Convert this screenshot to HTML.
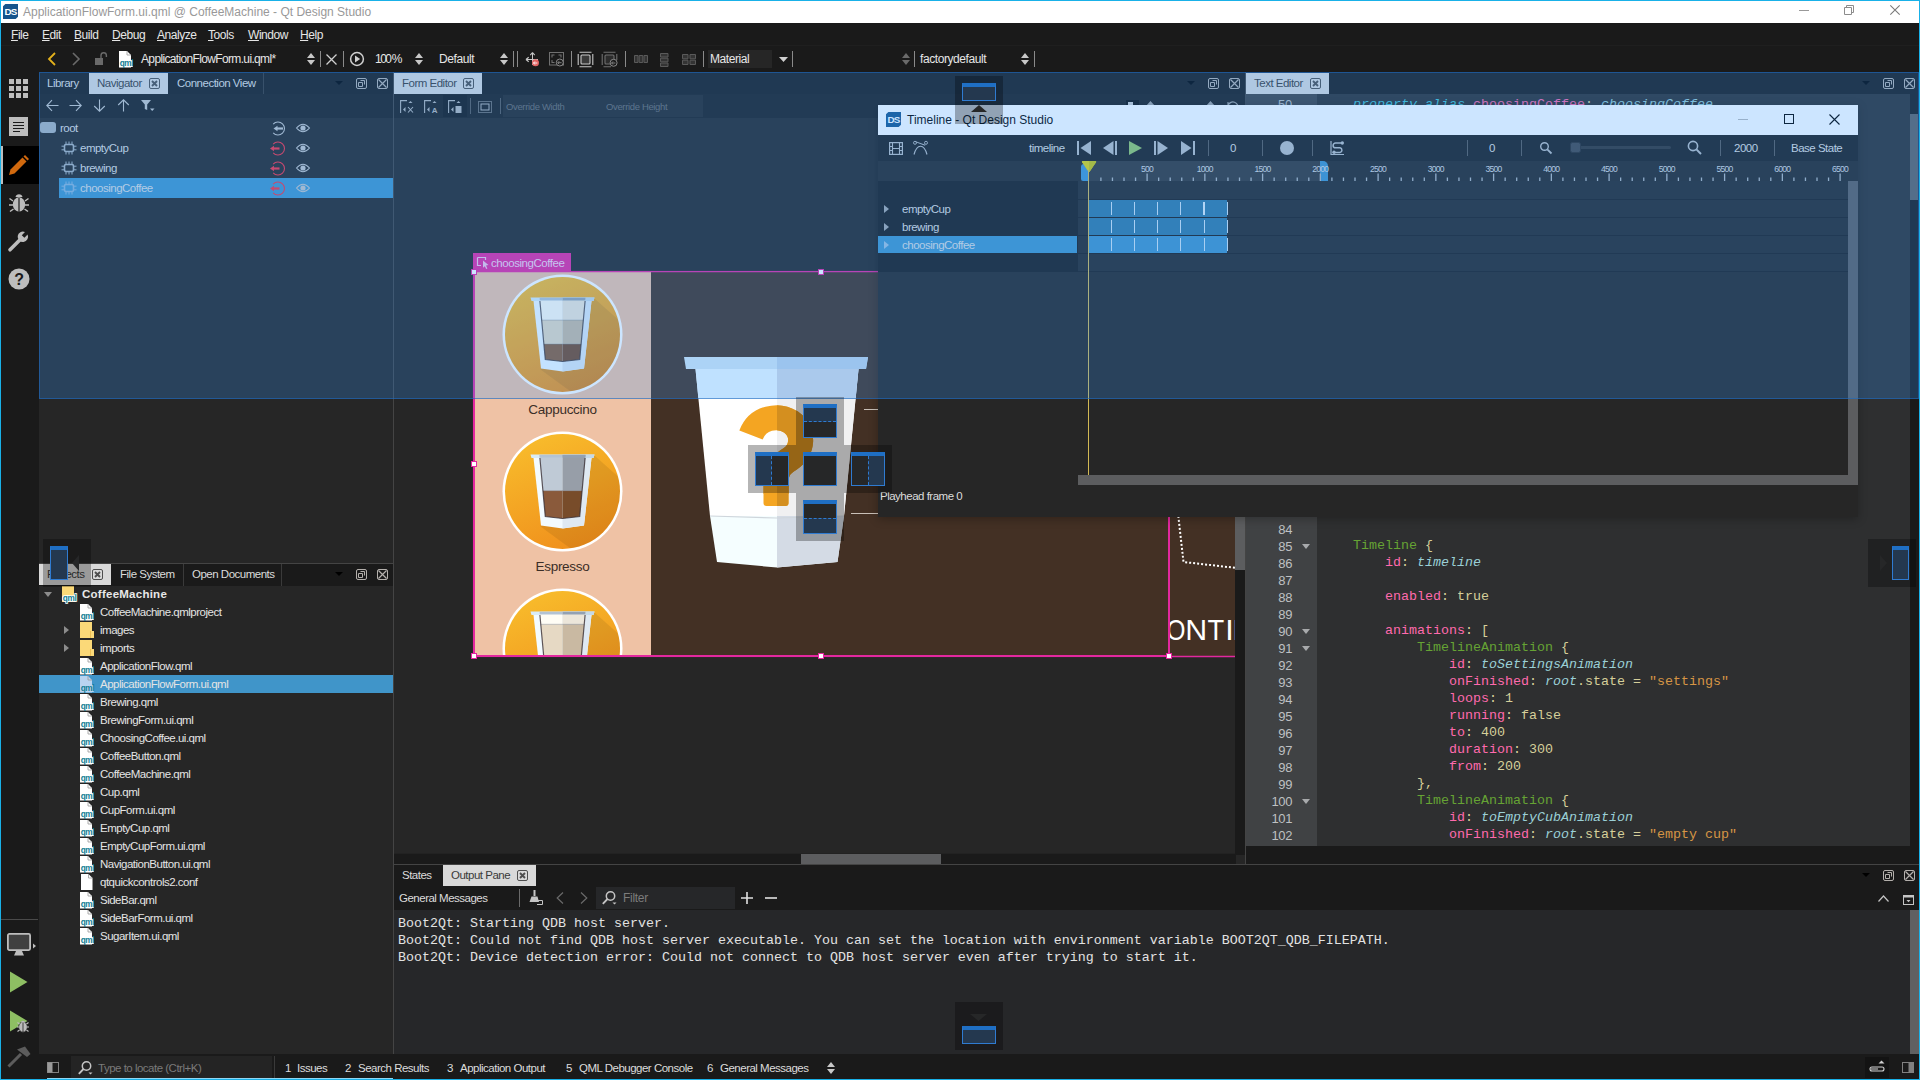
<!DOCTYPE html>
<html><head><meta charset="utf-8"><title>Qt Design Studio</title>
<style>
*{box-sizing:border-box;margin:0;padding:0}
html,body{width:1920px;height:1080px;overflow:hidden;background:#262626}
body{font-family:"Liberation Sans",sans-serif;font-size:11.5px;letter-spacing:-0.5px;color:#dcdcdc;position:relative}
.a{position:absolute}
.t{position:absolute;white-space:pre;line-height:14px}
.mono{font-family:"Liberation Mono",monospace;font-size:13.33px;letter-spacing:0}
svg{position:absolute;overflow:visible}
.sep{position:absolute;width:1px;background:#8a8a8a}
u{text-decoration:underline;text-underline-offset:1px}
</style></head>
<body>
<div class="a" style="left:0px;top:0px;width:1920px;height:23px;background:#ffffff;"></div>
<svg style="left:3px;top:4px" width="15" height="15" viewBox="0 0 16 16"><path d="M2.5 0 H16 V13.5 L13.5 16 H0 V2.5 Z" fill="#16548c"/><text x="8" y="12" font-family="Liberation Sans" font-weight="bold" font-size="10.5" fill="#fff" text-anchor="middle" letter-spacing="-0.9">DS</text></svg>
<div class="t" style="left:23px;top:5px;color:#999999;font-size:12px;letter-spacing:0">ApplicationFlowForm.ui.qml @ CoffeeMachine - Qt Design Studio</div>
<div class="a" style="left:1799px;top:10px;width:10px;height:1px;background:#999;"></div>
<svg style="left:1844px;top:5px" width="10" height="10" viewBox="0 0 10 10"><path d="M0.5 2.5 H7.5 V9.5 H0.5 Z M2.5 2.5 V0.5 H9.5 V7.5 H7.5" fill="none" stroke="#8c8c8c" stroke-width="1"/></svg>
<svg style="left:1890px;top:5px" width="10" height="10" viewBox="0 0 10 10"><path d="M0.3 0.3 L9.7 9.7 M9.7 0.3 L0.3 9.7" fill="none" stroke="#7a7a7a" stroke-width="1.1"/></svg>
<div class="a" style="left:1px;top:23px;width:1918px;height:49px;background:#1a1a1a;"></div>
<div class="a" style="left:1px;top:45px;width:1918px;height:1px;background:#1f1f1f;"></div>
<div class="t" style="left:11px;top:28px;color:#e6e6e6;font-size:12px;letter-spacing:-0.45px"><u>F</u>ile</div>
<div class="t" style="left:42px;top:28px;color:#e6e6e6;font-size:12px;letter-spacing:-0.45px"><u>E</u>dit</div>
<div class="t" style="left:74px;top:28px;color:#e6e6e6;font-size:12px;letter-spacing:-0.45px"><u>B</u>uild</div>
<div class="t" style="left:112px;top:28px;color:#e6e6e6;font-size:12px;letter-spacing:-0.45px"><u>D</u>ebug</div>
<div class="t" style="left:157px;top:28px;color:#e6e6e6;font-size:12px;letter-spacing:-0.45px"><u>A</u>nalyze</div>
<div class="t" style="left:208px;top:28px;color:#e6e6e6;font-size:12px;letter-spacing:-0.45px"><u>T</u>ools</div>
<div class="t" style="left:248px;top:28px;color:#e6e6e6;font-size:12px;letter-spacing:-0.45px"><u>W</u>indow</div>
<div class="t" style="left:300px;top:28px;color:#e6e6e6;font-size:12px;letter-spacing:-0.45px"><u>H</u>elp</div>
<svg style="left:47px;top:52px" width="10" height="14" viewBox="0 0 10 14"><path d="M8 1 L2 7 L8 13" fill="none" stroke="#e3b11c" stroke-width="1.8"/></svg>
<svg style="left:71px;top:52px" width="10" height="14" viewBox="0 0 10 14"><path d="M2 1 L8 7 L2 13" fill="none" stroke="#6a6a6a" stroke-width="1.6"/></svg>
<svg style="left:94px;top:51px" width="14" height="15" viewBox="0 0 14 15"><rect x="1" y="7" width="8" height="7" fill="#6a6a6a"/><path d="M7 7 V4.5 A2.7 2.7 0 0 1 12.4 4.5 V6" fill="none" stroke="#6a6a6a" stroke-width="1.4"/></svg>
<svg style="left:118px;top:51px" width="16" height="17" viewBox="0 0 16 17"><path d="M1 0 H9 L13 4 V16.5 H1 Z" fill="#ffffff"/><path d="M9 0 V4 H13" fill="none" stroke="#9a9a9a" stroke-width="0.8"/><rect x="1.5" y="9" width="13.5" height="7" rx="1" fill="#ffffff"/><text x="8.4" y="15" font-family="Liberation Sans" font-weight="bold" font-size="8.2" fill="#0f7c94" text-anchor="middle" letter-spacing="-0.35">qml</text></svg>
<div class="t" style="left:141px;top:52px;color:#e6e6e6;font-size:12px;letter-spacing:-0.65px">ApplicationFlowForm.ui.qml*</div>
<svg style="left:307px;top:52px" width="8" height="14" viewBox="0 0 8 14"><path d="M0 6 L4 1 L8 6 Z M0 8 L4 13 L8 8 Z" fill="#c8c8c8"/></svg>
<div class="sep" style="left:320px;top:51px;height:16px"></div>
<svg style="left:326px;top:54px" width="11" height="11" viewBox="0 0 11 11"><path d="M0.5 0.5 L10.5 10.5 M10.5 0.5 L0.5 10.5" fill="none" stroke="#d0d0d0" stroke-width="1.3"/></svg>
<div class="sep" style="left:343px;top:51px;height:16px"></div>
<svg style="left:349px;top:51px" width="16" height="16" viewBox="0 0 16 16"><circle cx="8" cy="8" r="6.4" fill="none" stroke="#d0d0d0" stroke-width="1.5"/><path d="M6 4.6 L11.2 8 L6 11.4 Z" fill="#d0d0d0"/></svg>
<div class="t" style="left:375px;top:52px;color:#e6e6e6;font-size:12px;letter-spacing:-1.5px;word-spacing:-0.5px">100 %</div>
<svg style="left:415px;top:52px" width="8" height="14" viewBox="0 0 8 14"><path d="M0 6 L4 1 L8 6 Z M0 8 L4 13 L8 8 Z" fill="#c8c8c8"/></svg>
<div class="t" style="left:439px;top:52px;color:#e6e6e6;font-size:12px;letter-spacing:-0.42px">Default</div>
<svg style="left:500px;top:52px" width="8" height="14" viewBox="0 0 8 14"><path d="M0 6 L4 1 L8 6 Z M0 8 L4 13 L8 8 Z" fill="#c8c8c8"/></svg>
<div class="sep" style="left:513px;top:51px;height:16px"></div>
<div class="sep" style="left:517px;top:51px;height:16px"></div>
<svg style="left:525px;top:51px" width="16" height="17" viewBox="0 0 16 17"><path d="M7.5 2 V14 M1.5 8.5 H13" fill="none" stroke="#c8c8c8" stroke-width="1"/><path d="M7.5 1.5 L5.3 4.2 M7.5 1.5 L9.7 4.2 M1 8.5 L3.7 6.3 M1 8.5 L3.7 10.7" fill="none" stroke="#c8c8c8" stroke-width="1.1"/><circle cx="10.5" cy="11.8" r="3.5" fill="#e26464"/><path d="M8.5 12.0 H12.3 M8.5 12.0 L9.9 10.5 M8.5 12.0 L9.9 13.5" stroke="#ffffff" stroke-width="0.9" fill="none"/></svg>
<svg style="left:549px;top:52px" width="16" height="15" viewBox="0 0 16 15"><rect x="0.5" y="0.5" width="14" height="12.5" fill="none" stroke="#707070" stroke-width="1"/><path d="M3 5.5 V3 H5.5 M9.5 3 H12 V5.5 M3 8 V10.5 H5.5" fill="none" stroke="#707070" stroke-width="1.1"/><circle cx="10.8" cy="10.5" r="3.5" fill="#1a1a1a" stroke="#8a8a8a" stroke-width="1"/><path d="M8.8 10.7 H12.600000000000001 M8.8 10.7 L10.200000000000001 9.2 M8.8 10.7 L10.200000000000001 12.2" stroke="#8a8a8a" stroke-width="0.9" fill="none"/></svg>
<div class="sep" style="left:571px;top:51px;height:16px"></div>
<svg style="left:577px;top:51px" width="17" height="17" viewBox="0 0 17 17"><rect x="4" y="4" width="9" height="9" rx="1" fill="#3a3a3a" stroke="#c8c8c8" stroke-width="1.1"/><path d="M2.5 1.2 H14.5 M2.5 15.8 H14.5 M1.2 3 V14 M15.8 3 V14" stroke="#c8c8c8" stroke-width="1.1"/></svg>
<svg style="left:601px;top:51px" width="18" height="17" viewBox="0 0 18 17"><rect x="4" y="4" width="9" height="9" rx="1" fill="#2c2c2c" stroke="#707070" stroke-width="1.1"/><path d="M2.5 1.2 H14.5 M2.5 15.8 H10 M1.2 3 V14 M15.8 3 V9" stroke="#707070" stroke-width="1.1"/><circle cx="12.6" cy="11.8" r="3.5" fill="#1a1a1a" stroke="#8a8a8a" stroke-width="1"/><path d="M10.6 12.0 H14.4 M10.6 12.0 L12.0 10.5 M10.6 12.0 L12.0 13.5" stroke="#8a8a8a" stroke-width="0.9" fill="none"/></svg>
<div class="sep" style="left:625px;top:51px;height:16px"></div>
<svg style="left:634px;top:55px" width="14" height="8" viewBox="0 0 14 8"><path d="M0.5 0.5 H4 V7.5 H0.5 Z M5.2 0.5 H8.8 V7.5 H5.2 Z M10 0.5 H13.5 V7.5 H10 Z" fill="#343434" stroke="#5a5a5a" stroke-width="1"/></svg>
<svg style="left:660px;top:53px" width="9" height="14" viewBox="0 0 9 14"><path d="M0.5 0.5 H8 V4 H0.5 Z M0.5 5.2 H8 V8.8 H0.5 Z M0.5 10 H8 V13.5 H0.5 Z" fill="#343434" stroke="#5a5a5a" stroke-width="1"/></svg>
<svg style="left:682px;top:54px" width="14" height="11" viewBox="0 0 14 11"><path d="M0.5 0.5 H6 V4.8 H0.5 Z M8 0.5 H13.5 V4.8 H8 Z M0.5 6.2 H6 V10.5 H0.5 Z M8 6.2 H13.5 V10.5 H8 Z" fill="#343434" stroke="#5a5a5a" stroke-width="1"/></svg>
<div class="sep" style="left:703px;top:51px;height:16px"></div>
<div class="a" style="left:708px;top:50px;width:64px;height:18px;background:#262626;"></div>
<div class="t" style="left:710px;top:52px;color:#e6e6e6;font-size:12px;letter-spacing:-0.42px">Material</div>
<svg style="left:779px;top:57px" width="9" height="5" viewBox="0 0 9 5"><path d="M0 0 H9 L4.5 5 Z" fill="#d0d0d0"/></svg>
<div class="sep" style="left:792px;top:51px;height:16px"></div>
<svg style="left:902px;top:52px" width="8" height="14" viewBox="0 0 8 14"><path d="M0 6 L4 1 L8 6 Z M0 8 L4 13 L8 8 Z" fill="#6a6a6a"/></svg>
<div class="sep" style="left:914px;top:51px;height:16px"></div>
<div class="t" style="left:920px;top:52px;color:#e6e6e6;font-size:12px;letter-spacing:-0.42px">factorydefault</div>
<svg style="left:1021px;top:52px" width="8" height="14" viewBox="0 0 8 14"><path d="M0 6 L4 1 L8 6 Z M0 8 L4 13 L8 8 Z" fill="#c8c8c8"/></svg>
<div class="sep" style="left:1034px;top:51px;height:16px"></div>
<div class="a" style="left:1px;top:72px;width:38px;height:1007px;background:#1a1a1a;"></div>
<div class="a" style="left:1px;top:146px;width:38px;height:38px;background:#000000;"></div>
<div class="a" style="left:1px;top:146px;width:2px;height:38px;background:#bdbdbd;"></div>
<svg style="left:9px;top:79px" width="19" height="19" viewBox="0 0 19 19"><rect x="0" y="0" width="5" height="5" fill="#bdbdbd"/><rect x="7" y="0" width="5" height="5" fill="#bdbdbd"/><rect x="14" y="0" width="5" height="5" fill="#bdbdbd"/><rect x="0" y="7" width="5" height="5" fill="#bdbdbd"/><rect x="7" y="7" width="5" height="5" fill="#bdbdbd"/><rect x="14" y="7" width="5" height="5" fill="#bdbdbd"/><rect x="0" y="14" width="5" height="5" fill="#bdbdbd"/><rect x="7" y="14" width="5" height="5" fill="#bdbdbd"/><rect x="14" y="14" width="5" height="5" fill="#bdbdbd"/></svg>
<svg style="left:9px;top:117px" width="19" height="19" viewBox="0 0 19 19"><rect x="0" y="0" width="19" height="19" fill="#bdbdbd"/><path d="M4 5.5 H15 M4 8.5 H15 M4 11.5 H15 M4 14.5 H11" stroke="#1a1a1a" stroke-width="1.2"/></svg>
<svg style="left:8px;top:155px" width="21" height="21" viewBox="0 0 21 21"><path d="M1 20 L2.5 14.5 L14.5 2.5 L18.5 6.5 L6.5 18.5 Z" fill="#d1690e"/><path d="M15.5 1.5 L17 0 L21 4 L19.5 5.5 Z" fill="#d1690e"/></svg>
<svg style="left:8px;top:192px" width="22" height="22" viewBox="0 0 22 22"><ellipse cx="11" cy="12.5" rx="6.2" ry="7.2" fill="#bdbdbd"/><path d="M7.5 5 A3.6 3.6 0 0 1 14.5 5 Z" fill="#bdbdbd"/><path d="M11 6 V20" stroke="#1a1a1a" stroke-width="1.2"/><path d="M5 9 L1.5 6.5 M5 13 H1 M5.5 17 L2 19.5 M17 9 L20.5 6.5 M17 13 H21 M16.5 17 L20 19.5" stroke="#bdbdbd" stroke-width="1.5" fill="none"/></svg>
<svg style="left:8px;top:230px" width="22" height="22" viewBox="0 0 22 22"><path d="M2 19.8 L11.5 10.3" stroke="#bdbdbd" stroke-width="3.6" stroke-linecap="round"/><path d="M19.6 4.6 L16.4 7.8 L13.8 5.2 L17 2 A5.2 5.2 0 1 0 19.6 4.6 Z" fill="#bdbdbd"/></svg>
<svg style="left:8px;top:268px" width="22" height="22" viewBox="0 0 22 22"><circle cx="11" cy="11" r="10.5" fill="#bdbdbd"/><text x="11" y="16.5" font-family="Liberation Sans" font-weight="bold" font-size="16" fill="#1a1a1a" text-anchor="middle">?</text></svg>
<div class="a" style="left:1px;top:919px;width:37px;height:1px;background:#4a4a4a;"></div>
<svg style="left:7px;top:933px" width="30" height="26" viewBox="0 0 30 26"><rect x="0.9" y="0.9" width="22.2" height="16.2" rx="1.5" fill="#404040" stroke="#bdbdbd" stroke-width="1.8"/><path d="M9 18 H15 L17 22.5 H7 Z" fill="#bdbdbd"/><path d="M26 10.5 L29 13 L26 15.5 Z" fill="#bdbdbd"/></svg>
<svg style="left:10px;top:970px" width="18" height="24" viewBox="0 0 18 24"><path d="M0 1.5 L17.5 12 L0 22.5 Z" fill="#8ebf63"/></svg>
<svg style="left:10px;top:1010px" width="20" height="24" viewBox="0 0 20 24"><path d="M0 0.5 L17.5 11 L0 21.5 Z" fill="#8ebf63"/><ellipse cx="13" cy="17" rx="4.4" ry="5.2" fill="#bdbdbd" stroke="#1a1a1a" stroke-width="0.8"/><path d="M13 12.5 V22" stroke="#333" stroke-width="0.9"/><path d="M10.5 12.6 A2.6 2.4 0 0 1 15.5 12.6 Z" fill="#bdbdbd"/><path d="M9.5 14 L7.5 12.5 M9.3 17 H7 M9.5 20 L7.5 21.5 M16.5 14 L18.5 12.5 M16.7 17 H19 M16.5 20 L18.5 21.5" stroke="#bdbdbd" stroke-width="1.1"/></svg>
<svg style="left:6px;top:1045px" width="26" height="24" viewBox="0 0 26 24"><path d="M2.5 21.5 L15 9" stroke="#5c5c5c" stroke-width="3"/><path d="M11 4.5 L19 1.5 L24.5 9 L21 12 Z" fill="#5c5c5c"/></svg>
<div class="a" style="left:39px;top:72px;width:354px;height:22px;background:#1a1a1a;"></div>
<div class="a" style="left:39px;top:94px;width:354px;height:24px;background:#1d1d1d;"></div>
<div class="a" style="left:39px;top:118px;width:354px;height:445px;background:#262626;"></div>
<div class="t" style="left:47px;top:76px;color:#dcdcdc;">Library</div>
<div class="a" style="left:89px;top:73px;width:79px;height:21px;background:#d9d9d9;"></div>
<div class="t" style="left:97px;top:76px;color:#3a3a3a;">Navigator</div>
<svg style="left:149px;top:78px" width="11" height="11" viewBox="0 0 11 11"><rect x="0.5" y="0.5" width="10" height="10" rx="1.5" fill="none" stroke="#4e4e4e" stroke-width="1"/><path d="M3 3 L8 8 M8 3 L3 8" stroke="#4e4e4e" stroke-width="1.9" fill="none"/></svg>
<div class="t" style="left:177px;top:76px;color:#dcdcdc;">Connection View</div>
<div class="a" style="left:263px;top:73px;width:1px;height:21px;background:#3a3a3a;"></div>
<svg style="left:335px;top:81px" width="8" height="4" viewBox="0 0 8 4"><path d="M0 0 H8 L4 4 Z" fill="#000000"/></svg>
<svg style="left:356px;top:78px" width="11" height="11" viewBox="0 0 11 11"><rect x="0.5" y="0.5" width="10" height="10" rx="1.5" fill="none" stroke="#b4b0ac" stroke-width="1"/><path d="M4.5 2.5 H8.5 V6.5 M2.5 4.5 H6.5 V8.5 H2.5 Z" stroke="#b4b0ac" stroke-width="1" fill="none"/></svg>
<svg style="left:377px;top:78px" width="11" height="11" viewBox="0 0 11 11"><rect x="0.5" y="0.5" width="10" height="10" rx="1.5" fill="none" stroke="#b4b0ac" stroke-width="1"/><path d="M1.5 1.5 L9.5 9.5 M9.5 1.5 L1.5 9.5" stroke="#b4b0ac" stroke-width="1.2" fill="none"/></svg>
<svg style="left:46px;top:99px" width="13" height="13" viewBox="0 0 13 13"><g transform="rotate(0 6.5 6.5)"><path d="M0.8 6.5 H12.5 M6 1.2 L0.8 6.5 L6 11.8" fill="none" stroke="#c4c4c4" stroke-width="1.1"/></g></svg>
<svg style="left:69px;top:99px" width="13" height="13" viewBox="0 0 13 13"><g transform="rotate(180 6.5 6.5)"><path d="M0.8 6.5 H12.5 M6 1.2 L0.8 6.5 L6 11.8" fill="none" stroke="#c4c4c4" stroke-width="1.1"/></g></svg>
<svg style="left:93px;top:99px" width="13" height="13" viewBox="0 0 13 13"><g transform="rotate(270 6.5 6.5)"><path d="M0.8 6.5 H12.5 M6 1.2 L0.8 6.5 L6 11.8" fill="none" stroke="#c4c4c4" stroke-width="1.1"/></g></svg>
<svg style="left:117px;top:99px" width="13" height="13" viewBox="0 0 13 13"><g transform="rotate(90 6.5 6.5)"><path d="M0.8 6.5 H12.5 M6 1.2 L0.8 6.5 L6 11.8" fill="none" stroke="#c4c4c4" stroke-width="1.1"/></g></svg>
<svg style="left:141px;top:100px" width="14" height="12" viewBox="0 0 14 12"><path d="M0 0 H10 L6.2 4.5 V10 L3.8 9 V4.5 Z" fill="#c4c4c4"/><path d="M9 8.5 H13.5 L11.2 11 Z" fill="#c4c4c4"/></svg>
<div class="a" style="left:40px;top:122px;width:16px;height:11px;background:#a9b2ba;border-radius:3px"></div>
<div class="t" style="left:60px;top:121px;color:#dcdcdc;">root</div>
<div class="a" style="left:59px;top:178px;width:334px;height:20px;background:#4095c9;"></div>
<svg style="left:61px;top:141px" width="16" height="14" viewBox="0 0 16 14"><rect x="3.5" y="3.5" width="9" height="7" rx="1.5" fill="none" stroke="#a9b2ba" stroke-width="1.6"/><path d="M5 0.5 V3 M5 11 V13.5" stroke="#a9b2ba" stroke-width="1"/><path d="M8 0.5 V3 M8 11 V13.5" stroke="#a9b2ba" stroke-width="1"/><path d="M11 0.5 V3 M11 11 V13.5" stroke="#a9b2ba" stroke-width="1"/><path d="M0.5 5.2 H3 M13 5.2 H15.5" stroke="#a9b2ba" stroke-width="1"/><path d="M0.5 8.8 H3 M13 8.8 H15.5" stroke="#a9b2ba" stroke-width="1"/></svg>
<div class="t" style="left:80px;top:141px;color:#dcdcdc;">emptyCup</div>
<svg style="left:61px;top:161px" width="16" height="14" viewBox="0 0 16 14"><rect x="3.5" y="3.5" width="9" height="7" rx="1.5" fill="none" stroke="#a9b2ba" stroke-width="1.6"/><path d="M5 0.5 V3 M5 11 V13.5" stroke="#a9b2ba" stroke-width="1"/><path d="M8 0.5 V3 M8 11 V13.5" stroke="#a9b2ba" stroke-width="1"/><path d="M11 0.5 V3 M11 11 V13.5" stroke="#a9b2ba" stroke-width="1"/><path d="M0.5 5.2 H3 M13 5.2 H15.5" stroke="#a9b2ba" stroke-width="1"/><path d="M0.5 8.8 H3 M13 8.8 H15.5" stroke="#a9b2ba" stroke-width="1"/></svg>
<div class="t" style="left:80px;top:161px;color:#dcdcdc;">brewing</div>
<svg style="left:61px;top:181px" width="16" height="14" viewBox="0 0 16 14"><rect x="3.5" y="3.5" width="9" height="7" rx="1.5" fill="none" stroke="#8db4d6" stroke-width="1.6"/><path d="M5 0.5 V3 M5 11 V13.5" stroke="#8db4d6" stroke-width="1"/><path d="M8 0.5 V3 M8 11 V13.5" stroke="#8db4d6" stroke-width="1"/><path d="M11 0.5 V3 M11 11 V13.5" stroke="#8db4d6" stroke-width="1"/><path d="M0.5 5.2 H3 M13 5.2 H15.5" stroke="#8db4d6" stroke-width="1"/><path d="M0.5 8.8 H3 M13 8.8 H15.5" stroke="#8db4d6" stroke-width="1"/></svg>
<div class="t" style="left:80px;top:181px;color:#dcdcdc;">choosingCoffee</div>
<svg style="left:270px;top:121px" width="16" height="15" viewBox="0 0 16 15"><path d="M3.2 3.1 A6.5 6.5 0 1 1 3.2 11.9" fill="none" stroke="#c4c4c4" stroke-width="1.1"/><path d="M6.5 7.5 H13.0" stroke="#c4c4c4" stroke-width="2.2"/><path d="M3.5 7.5 L7.5 4.8 V10.2 Z" fill="#c4c4c4"/></svg>
<svg style="left:296px;top:123px" width="14" height="10" viewBox="0 0 14 10"><path d="M0.5 5 Q7 -2.5 13.5 5 Q7 12.5 0.5 5 Z" fill="none" stroke="#c4c4c4" stroke-width="1.1"/><circle cx="7" cy="5" r="2.6" fill="#c4c4c4"/></svg>
<svg style="left:270px;top:141px" width="16" height="15" viewBox="0 0 16 15"><path d="M3.2 3.1 A6.5 6.5 0 1 1 3.2 11.9" fill="none" stroke="#f53040" stroke-width="1.1"/><path d="M3.0 7.5 H9.5" stroke="#f53040" stroke-width="2.2"/><path d="M0.0 7.5 L4.0 4.8 V10.2 Z" fill="#f53040"/></svg>
<svg style="left:296px;top:143px" width="14" height="10" viewBox="0 0 14 10"><path d="M0.5 5 Q7 -2.5 13.5 5 Q7 12.5 0.5 5 Z" fill="none" stroke="#c4c4c4" stroke-width="1.1"/><circle cx="7" cy="5" r="2.6" fill="#c4c4c4"/></svg>
<svg style="left:270px;top:161px" width="16" height="15" viewBox="0 0 16 15"><path d="M3.2 3.1 A6.5 6.5 0 1 1 3.2 11.9" fill="none" stroke="#f53040" stroke-width="1.1"/><path d="M3.0 7.5 H9.5" stroke="#f53040" stroke-width="2.2"/><path d="M0.0 7.5 L4.0 4.8 V10.2 Z" fill="#f53040"/></svg>
<svg style="left:296px;top:163px" width="14" height="10" viewBox="0 0 14 10"><path d="M0.5 5 Q7 -2.5 13.5 5 Q7 12.5 0.5 5 Z" fill="none" stroke="#c4c4c4" stroke-width="1.1"/><circle cx="7" cy="5" r="2.6" fill="#c4c4c4"/></svg>
<svg style="left:270px;top:181px" width="16" height="15" viewBox="0 0 16 15"><path d="M3.2 3.1 A6.5 6.5 0 1 1 3.2 11.9" fill="none" stroke="#f53040" stroke-width="1.1"/><path d="M3.0 7.5 H9.5" stroke="#f53040" stroke-width="2.2"/><path d="M0.0 7.5 L4.0 4.8 V10.2 Z" fill="#f53040"/></svg>
<svg style="left:296px;top:183px" width="14" height="10" viewBox="0 0 14 10"><path d="M0.5 5 Q7 -2.5 13.5 5 Q7 12.5 0.5 5 Z" fill="none" stroke="#c4c4c4" stroke-width="1.1"/><circle cx="7" cy="5" r="2.6" fill="#c4c4c4"/></svg>
<div class="a" style="left:39px;top:563px;width:354px;height:1px;background:#444444;"></div>
<div class="a" style="left:39px;top:564px;width:354px;height:22px;background:#1a1a1a;"></div>
<div class="a" style="left:39px;top:586px;width:354px;height:468px;background:#262626;"></div>
<div class="a" style="left:39px;top:564px;width:72px;height:21px;background:#d9d9d9;"></div>
<div class="t" style="left:47px;top:567px;color:#3a3a3a;">Projects</div>
<svg style="left:92px;top:569px" width="11" height="11" viewBox="0 0 11 11"><rect x="0.5" y="0.5" width="10" height="10" rx="1.5" fill="none" stroke="#4e4e4e" stroke-width="1"/><path d="M3 3 L8 8 M8 3 L3 8" stroke="#4e4e4e" stroke-width="1.9" fill="none"/></svg>
<div class="t" style="left:120px;top:567px;color:#dcdcdc;">File System</div>
<div class="a" style="left:183px;top:564px;width:1px;height:22px;background:#3a3a3a;"></div>
<div class="t" style="left:192px;top:567px;color:#dcdcdc;">Open Documents</div>
<div class="a" style="left:281px;top:564px;width:1px;height:22px;background:#3a3a3a;"></div>
<svg style="left:335px;top:572px" width="8" height="4" viewBox="0 0 8 4"><path d="M0 0 H8 L4 4 Z" fill="#000000"/></svg>
<svg style="left:356px;top:569px" width="11" height="11" viewBox="0 0 11 11"><rect x="0.5" y="0.5" width="10" height="10" rx="1.5" fill="none" stroke="#b4b0ac" stroke-width="1"/><path d="M4.5 2.5 H8.5 V6.5 M2.5 4.5 H6.5 V8.5 H2.5 Z" stroke="#b4b0ac" stroke-width="1" fill="none"/></svg>
<svg style="left:377px;top:569px" width="11" height="11" viewBox="0 0 11 11"><rect x="0.5" y="0.5" width="10" height="10" rx="1.5" fill="none" stroke="#b4b0ac" stroke-width="1"/><path d="M1.5 1.5 L9.5 9.5 M9.5 1.5 L1.5 9.5" stroke="#b4b0ac" stroke-width="1.2" fill="none"/></svg>
<svg style="left:44px;top:592px" width="8" height="5" viewBox="0 0 8 5"><path d="M0 0 H8 L4 5 Z" fill="#8c8c8c"/></svg>
<svg style="left:62px;top:586px" width="14" height="16" viewBox="0 0 14 16"><path d="M0 0 H12 V16 H0 Z" fill="#fbd978"/><path d="M10 9 H14 V16 H10 Z" fill="#fbd978"/><path d="M10.5 9 V16" stroke="#e8b84a" stroke-width="0.8"/></svg>
<svg style="left:60px;top:590px" width="20" height="14" viewBox="0 0 20 14"><text x="9.6" y="10.5" font-family="Liberation Sans" font-weight="bold" font-size="8.2" fill="#0f7c94" stroke="#ffffff" stroke-width="1.6" paint-order="stroke" text-anchor="middle" letter-spacing="-0.35">qml</text></svg>
<div class="t" style="left:82px;top:587px;color:#e8e8e8;font-weight:bold;letter-spacing:0.25px">CoffeeMachine</div>
<svg style="left:79px;top:604px" width="16" height="17" viewBox="0 0 16 17"><path d="M1 0 H9 L13 4 V16.5 H1 Z" fill="#ffffff"/><path d="M9 0 V4 H13" fill="none" stroke="#9a9a9a" stroke-width="0.8"/><rect x="1.5" y="9" width="13.5" height="7" rx="1" fill="#ffffff"/><text x="8.4" y="15" font-family="Liberation Sans" font-weight="bold" font-size="8.2" fill="#0f7c94" text-anchor="middle" letter-spacing="-0.35">qml</text></svg>
<div class="t" style="left:100px;top:605px;color:#e4e4e4;">CoffeeMachine.qmlproject</div>
<svg style="left:64px;top:626px" width="5" height="8" viewBox="0 0 5 8"><path d="M0 0 L5 4 L0 8 Z" fill="#8c8c8c"/></svg>
<svg style="left:80px;top:622px" width="14" height="16" viewBox="0 0 14 16"><path d="M0 0 H12 V16 H0 Z" fill="#fbd978"/><path d="M10 9 H14 V16 H10 Z" fill="#fbd978"/><path d="M10.5 9 V16" stroke="#e8b84a" stroke-width="0.8"/></svg>
<div class="t" style="left:100px;top:623px;color:#e4e4e4;">images</div>
<svg style="left:64px;top:644px" width="5" height="8" viewBox="0 0 5 8"><path d="M0 0 L5 4 L0 8 Z" fill="#8c8c8c"/></svg>
<svg style="left:80px;top:640px" width="14" height="16" viewBox="0 0 14 16"><path d="M0 0 H12 V16 H0 Z" fill="#fbd978"/><path d="M10 9 H14 V16 H10 Z" fill="#fbd978"/><path d="M10.5 9 V16" stroke="#e8b84a" stroke-width="0.8"/></svg>
<div class="t" style="left:100px;top:641px;color:#e4e4e4;">imports</div>
<svg style="left:79px;top:658px" width="16" height="17" viewBox="0 0 16 17"><path d="M1 0 H9 L13 4 V16.5 H1 Z" fill="#ffffff"/><path d="M9 0 V4 H13" fill="none" stroke="#9a9a9a" stroke-width="0.8"/><rect x="1.5" y="9" width="13.5" height="7" rx="1" fill="#ffffff"/><text x="8.4" y="15" font-family="Liberation Sans" font-weight="bold" font-size="8.2" fill="#0f7c94" text-anchor="middle" letter-spacing="-0.35">qml</text></svg>
<div class="t" style="left:100px;top:659px;color:#e4e4e4;">ApplicationFlow.qml</div>
<div class="a" style="left:39px;top:675px;width:354px;height:18px;background:#4095c9;"></div>
<svg style="left:79px;top:676px" width="16" height="17" viewBox="0 0 16 17"><path d="M1 0 H9 L13 4 V16.5 H1 Z" fill="#b9d4f0"/><path d="M9 0 V4 H13" fill="none" stroke="#9a9a9a" stroke-width="0.8"/><rect x="1.5" y="9" width="13.5" height="7" rx="1" fill="#b9d4f0"/><text x="8.4" y="15" font-family="Liberation Sans" font-weight="bold" font-size="8.2" fill="#0f7c94" text-anchor="middle" letter-spacing="-0.35">qml</text></svg>
<div class="t" style="left:100px;top:677px;color:#e4e4e4;">ApplicationFlowForm.ui.qml</div>
<svg style="left:79px;top:694px" width="16" height="17" viewBox="0 0 16 17"><path d="M1 0 H9 L13 4 V16.5 H1 Z" fill="#ffffff"/><path d="M9 0 V4 H13" fill="none" stroke="#9a9a9a" stroke-width="0.8"/><rect x="1.5" y="9" width="13.5" height="7" rx="1" fill="#ffffff"/><text x="8.4" y="15" font-family="Liberation Sans" font-weight="bold" font-size="8.2" fill="#0f7c94" text-anchor="middle" letter-spacing="-0.35">qml</text></svg>
<div class="t" style="left:100px;top:695px;color:#e4e4e4;">Brewing.qml</div>
<svg style="left:79px;top:712px" width="16" height="17" viewBox="0 0 16 17"><path d="M1 0 H9 L13 4 V16.5 H1 Z" fill="#ffffff"/><path d="M9 0 V4 H13" fill="none" stroke="#9a9a9a" stroke-width="0.8"/><rect x="1.5" y="9" width="13.5" height="7" rx="1" fill="#ffffff"/><text x="8.4" y="15" font-family="Liberation Sans" font-weight="bold" font-size="8.2" fill="#0f7c94" text-anchor="middle" letter-spacing="-0.35">qml</text></svg>
<div class="t" style="left:100px;top:713px;color:#e4e4e4;">BrewingForm.ui.qml</div>
<svg style="left:79px;top:730px" width="16" height="17" viewBox="0 0 16 17"><path d="M1 0 H9 L13 4 V16.5 H1 Z" fill="#ffffff"/><path d="M9 0 V4 H13" fill="none" stroke="#9a9a9a" stroke-width="0.8"/><rect x="1.5" y="9" width="13.5" height="7" rx="1" fill="#ffffff"/><text x="8.4" y="15" font-family="Liberation Sans" font-weight="bold" font-size="8.2" fill="#0f7c94" text-anchor="middle" letter-spacing="-0.35">qml</text></svg>
<div class="t" style="left:100px;top:731px;color:#e4e4e4;">ChoosingCoffee.ui.qml</div>
<svg style="left:79px;top:748px" width="16" height="17" viewBox="0 0 16 17"><path d="M1 0 H9 L13 4 V16.5 H1 Z" fill="#ffffff"/><path d="M9 0 V4 H13" fill="none" stroke="#9a9a9a" stroke-width="0.8"/><rect x="1.5" y="9" width="13.5" height="7" rx="1" fill="#ffffff"/><text x="8.4" y="15" font-family="Liberation Sans" font-weight="bold" font-size="8.2" fill="#0f7c94" text-anchor="middle" letter-spacing="-0.35">qml</text></svg>
<div class="t" style="left:100px;top:749px;color:#e4e4e4;">CoffeeButton.qml</div>
<svg style="left:79px;top:766px" width="16" height="17" viewBox="0 0 16 17"><path d="M1 0 H9 L13 4 V16.5 H1 Z" fill="#ffffff"/><path d="M9 0 V4 H13" fill="none" stroke="#9a9a9a" stroke-width="0.8"/><rect x="1.5" y="9" width="13.5" height="7" rx="1" fill="#ffffff"/><text x="8.4" y="15" font-family="Liberation Sans" font-weight="bold" font-size="8.2" fill="#0f7c94" text-anchor="middle" letter-spacing="-0.35">qml</text></svg>
<div class="t" style="left:100px;top:767px;color:#e4e4e4;">CoffeeMachine.qml</div>
<svg style="left:79px;top:784px" width="16" height="17" viewBox="0 0 16 17"><path d="M1 0 H9 L13 4 V16.5 H1 Z" fill="#ffffff"/><path d="M9 0 V4 H13" fill="none" stroke="#9a9a9a" stroke-width="0.8"/><rect x="1.5" y="9" width="13.5" height="7" rx="1" fill="#ffffff"/><text x="8.4" y="15" font-family="Liberation Sans" font-weight="bold" font-size="8.2" fill="#0f7c94" text-anchor="middle" letter-spacing="-0.35">qml</text></svg>
<div class="t" style="left:100px;top:785px;color:#e4e4e4;">Cup.qml</div>
<svg style="left:79px;top:802px" width="16" height="17" viewBox="0 0 16 17"><path d="M1 0 H9 L13 4 V16.5 H1 Z" fill="#ffffff"/><path d="M9 0 V4 H13" fill="none" stroke="#9a9a9a" stroke-width="0.8"/><rect x="1.5" y="9" width="13.5" height="7" rx="1" fill="#ffffff"/><text x="8.4" y="15" font-family="Liberation Sans" font-weight="bold" font-size="8.2" fill="#0f7c94" text-anchor="middle" letter-spacing="-0.35">qml</text></svg>
<div class="t" style="left:100px;top:803px;color:#e4e4e4;">CupForm.ui.qml</div>
<svg style="left:79px;top:820px" width="16" height="17" viewBox="0 0 16 17"><path d="M1 0 H9 L13 4 V16.5 H1 Z" fill="#ffffff"/><path d="M9 0 V4 H13" fill="none" stroke="#9a9a9a" stroke-width="0.8"/><rect x="1.5" y="9" width="13.5" height="7" rx="1" fill="#ffffff"/><text x="8.4" y="15" font-family="Liberation Sans" font-weight="bold" font-size="8.2" fill="#0f7c94" text-anchor="middle" letter-spacing="-0.35">qml</text></svg>
<div class="t" style="left:100px;top:821px;color:#e4e4e4;">EmptyCup.qml</div>
<svg style="left:79px;top:838px" width="16" height="17" viewBox="0 0 16 17"><path d="M1 0 H9 L13 4 V16.5 H1 Z" fill="#ffffff"/><path d="M9 0 V4 H13" fill="none" stroke="#9a9a9a" stroke-width="0.8"/><rect x="1.5" y="9" width="13.5" height="7" rx="1" fill="#ffffff"/><text x="8.4" y="15" font-family="Liberation Sans" font-weight="bold" font-size="8.2" fill="#0f7c94" text-anchor="middle" letter-spacing="-0.35">qml</text></svg>
<div class="t" style="left:100px;top:839px;color:#e4e4e4;">EmptyCupForm.ui.qml</div>
<svg style="left:79px;top:856px" width="16" height="17" viewBox="0 0 16 17"><path d="M1 0 H9 L13 4 V16.5 H1 Z" fill="#ffffff"/><path d="M9 0 V4 H13" fill="none" stroke="#9a9a9a" stroke-width="0.8"/><rect x="1.5" y="9" width="13.5" height="7" rx="1" fill="#ffffff"/><text x="8.4" y="15" font-family="Liberation Sans" font-weight="bold" font-size="8.2" fill="#0f7c94" text-anchor="middle" letter-spacing="-0.35">qml</text></svg>
<div class="t" style="left:100px;top:857px;color:#e4e4e4;">NavigationButton.ui.qml</div>
<svg style="left:80px;top:874px" width="13" height="16" viewBox="0 0 13 16"><path d="M1 0 H8.5 L12.5 4 V16 H1 Z" fill="#fff"/><path d="M8.5 0 V4 H12.5" fill="none" stroke="#9a9a9a" stroke-width="0.8"/></svg>
<div class="t" style="left:100px;top:875px;color:#e4e4e4;">qtquickcontrols2.conf</div>
<svg style="left:79px;top:892px" width="16" height="17" viewBox="0 0 16 17"><path d="M1 0 H9 L13 4 V16.5 H1 Z" fill="#ffffff"/><path d="M9 0 V4 H13" fill="none" stroke="#9a9a9a" stroke-width="0.8"/><rect x="1.5" y="9" width="13.5" height="7" rx="1" fill="#ffffff"/><text x="8.4" y="15" font-family="Liberation Sans" font-weight="bold" font-size="8.2" fill="#0f7c94" text-anchor="middle" letter-spacing="-0.35">qml</text></svg>
<div class="t" style="left:100px;top:893px;color:#e4e4e4;">SideBar.qml</div>
<svg style="left:79px;top:910px" width="16" height="17" viewBox="0 0 16 17"><path d="M1 0 H9 L13 4 V16.5 H1 Z" fill="#ffffff"/><path d="M9 0 V4 H13" fill="none" stroke="#9a9a9a" stroke-width="0.8"/><rect x="1.5" y="9" width="13.5" height="7" rx="1" fill="#ffffff"/><text x="8.4" y="15" font-family="Liberation Sans" font-weight="bold" font-size="8.2" fill="#0f7c94" text-anchor="middle" letter-spacing="-0.35">qml</text></svg>
<div class="t" style="left:100px;top:911px;color:#e4e4e4;">SideBarForm.ui.qml</div>
<svg style="left:79px;top:928px" width="16" height="17" viewBox="0 0 16 17"><path d="M1 0 H9 L13 4 V16.5 H1 Z" fill="#ffffff"/><path d="M9 0 V4 H13" fill="none" stroke="#9a9a9a" stroke-width="0.8"/><rect x="1.5" y="9" width="13.5" height="7" rx="1" fill="#ffffff"/><text x="8.4" y="15" font-family="Liberation Sans" font-weight="bold" font-size="8.2" fill="#0f7c94" text-anchor="middle" letter-spacing="-0.35">qml</text></svg>
<div class="t" style="left:100px;top:929px;color:#e4e4e4;">SugarItem.ui.qml</div>
<div class="a" style="left:393px;top:72px;width:1px;height:982px;background:#444444;"></div>
<div class="a" style="left:394px;top:72px;width:852px;height:22px;background:#1a1a1a;"></div>
<div class="a" style="left:394px;top:73px;width:88px;height:21px;background:#d9d9d9;"></div>
<div class="t" style="left:402px;top:76px;color:#3a3a3a;">Form Editor</div>
<svg style="left:463px;top:78px" width="11" height="11" viewBox="0 0 11 11"><rect x="0.5" y="0.5" width="10" height="10" rx="1.5" fill="none" stroke="#4e4e4e" stroke-width="1"/><path d="M3 3 L8 8 M8 3 L3 8" stroke="#4e4e4e" stroke-width="1.9" fill="none"/></svg>
<svg style="left:1187px;top:81px" width="8" height="4" viewBox="0 0 8 4"><path d="M0 0 H8 L4 4 Z" fill="#000000"/></svg>
<svg style="left:1208px;top:78px" width="11" height="11" viewBox="0 0 11 11"><rect x="0.5" y="0.5" width="10" height="10" rx="1.5" fill="none" stroke="#b4b0ac" stroke-width="1"/><path d="M4.5 2.5 H8.5 V6.5 M2.5 4.5 H6.5 V8.5 H2.5 Z" stroke="#b4b0ac" stroke-width="1" fill="none"/></svg>
<svg style="left:1229px;top:78px" width="11" height="11" viewBox="0 0 11 11"><rect x="0.5" y="0.5" width="10" height="10" rx="1.5" fill="none" stroke="#b4b0ac" stroke-width="1"/><path d="M1.5 1.5 L9.5 9.5 M9.5 1.5 L1.5 9.5" stroke="#b4b0ac" stroke-width="1.2" fill="none"/></svg>
<div class="a" style="left:394px;top:94px;width:852px;height:24px;background:#1d1d1d;"></div>
<div class="a" style="left:443px;top:95px;width:24px;height:22px;background:#161616;"></div>
<svg style="left:400px;top:100px" width="14" height="13" viewBox="0 0 14 13"><path d="M0.6 13 V0.6 H7" fill="none" stroke="#b4b4b4" stroke-width="1.1"/><path d="M3 9.5 L5.5 7 V12 Z" fill="#b4b4b4"/><path d="M8.5 3 H12.5 L10.5 1 Z" fill="#b4b4b4"/><path d="M8 7 L13 12.5 M13 7 L8 12.5" stroke="#b4b4b4" stroke-width="1.1"/></svg>
<svg style="left:424px;top:100px" width="14" height="13" viewBox="0 0 14 13"><path d="M0.6 13 V0.6 H7" fill="none" stroke="#b4b4b4" stroke-width="1.1"/><path d="M3 9.5 L5.5 7 V12 Z" fill="#b4b4b4"/><path d="M8.5 3 H12.5 L10.5 1 Z" fill="#b4b4b4"/><text x="10.5" y="13" font-family="Liberation Sans" font-weight="bold" font-size="8" fill="#b4b4b4" text-anchor="middle">A</text></svg>
<svg style="left:448px;top:100px" width="14" height="13" viewBox="0 0 14 13"><path d="M0.6 13 V0.6 H7" fill="none" stroke="#b4b4b4" stroke-width="1.1"/><path d="M3 9.5 L5.5 7 V12 Z" fill="#b4b4b4"/><path d="M8.5 3 H12.5 L10.5 1 Z" fill="#b4b4b4"/><rect x="7.5" y="6" width="6" height="7" fill="#b4b4b4"/></svg>
<div class="a" style="left:470px;top:98px;width:1px;height:16px;background:#5a5a5a;"></div>
<svg style="left:478px;top:101px" width="14" height="12" viewBox="0 0 14 12"><rect x="0.5" y="0.5" width="13" height="11" fill="none" stroke="#b4b4b4" stroke-width="1" stroke-dasharray="1 1"/><rect x="3" y="3" width="8" height="6" fill="none" stroke="#b4b4b4" stroke-width="1"/></svg>
<div class="a" style="left:500px;top:98px;width:1px;height:16px;background:#5a5a5a;"></div>
<div class="a" style="left:503px;top:95px;width:200px;height:22px;background:#262626;"></div>
<div class="t" style="left:506px;top:100px;color:#6a6a6a;font-size:9.5px;letter-spacing:-0.35px">Override Width</div>
<div class="t" style="left:606px;top:100px;color:#6a6a6a;font-size:9.5px;letter-spacing:-0.35px">Override Height</div>
<div class="a" style="left:1126px;top:100px;width:13px;height:18px;background:#0e0e0e;"></div>
<div class="a" style="left:1128px;top:102px;width:5px;height:8px;background:#d8d8d8;"></div>
<svg style="left:1146px;top:101px" width="9" height="14" viewBox="0 0 9 14"><path d="M0 5 L4.5 0 L9 5 Z M0 8 L4.5 13 L9 8 Z" fill="#a8a8a8"/></svg>
<div class="t" style="left:1166px;top:102px;color:#9a9a9a;font-size:9.5px;letter-spacing:-0.4px">50 %</div>
<svg style="left:1206px;top:101px" width="9" height="14" viewBox="0 0 9 14"><path d="M0 5 L4.5 0 L9 5 Z M0 8 L4.5 13 L9 8 Z" fill="#a8a8a8"/></svg>
<svg style="left:1227px;top:101px" width="11" height="12" viewBox="0 0 11 12"><path d="M1 1 V5 H5 M1 5 A5 5 0 1 1 3 10" fill="none" stroke="#a8a8a8" stroke-width="1.2"/></svg>
<div class="a" style="left:394px;top:118px;width:841px;height:735px;background:#262626;"></div>
<svg style="left:394px;top:118px" width="841" height="735" viewBox="394 118 841 735"><defs><linearGradient id="og" x1="0.2" y1="0" x2="0.6" y2="1"><stop offset="0" stop-color="#f8bd2c"/><stop offset="1" stop-color="#f0901c"/></linearGradient><clipPath id="cv"><rect x="474" y="272" width="761" height="384"/></clipPath><clipPath id="c1"><circle cx="562.5" cy="334.5" r="57.5"/></clipPath><clipPath id="c2"><circle cx="562.5" cy="491.5" r="57.5"/></clipPath><clipPath id="c3"><circle cx="562.5" cy="648.5" r="57.5"/></clipPath></defs><g clip-path="url(#cv)"><rect x="474" y="272" width="761" height="384" fill="#433024"/><rect x="474" y="272" width="177" height="384" fill="#efc2a5"/><circle cx="562.5" cy="334.5" r="60" fill="#ffffff"/><circle cx="562.5" cy="334.5" r="57.5" fill="url(#og)"/><g clip-path="url(#c1)"><path d="M594.5 298.5 L632.5 332.5 L592.5 407.5 L540.5 369.5 Z" fill="#000" opacity="0.08"/><path d="M530.5 297.5 H594.5 L593.5 301.0 H531.5 Z" fill="#d9ecf7"/><path d="M562.5 297.5 H594.5 L593.5 301.0 H562.5 Z" fill="#c5d9e8"/><path d="M533.5 301.0 H591.5 L584.0 368.5 L562.5 371.5 L541.0 368.5 Z" fill="#f3fbff"/><path d="M562.5 301.0 H591.5 L584.0 368.5 L562.5 371.5 Z" fill="#dfe9f2"/><path d="M539.5 298.0 H562.5 V320.1 L541.6 320.1 Z" fill="#fffbf1"/><path d="M585.5 298.0 H562.5 V320.1 L583.4 320.1 Z" fill="#efe6d6"/><path d="M541.6 320.1 H562.5 V344.1 L543.9 344.1 Z" fill="#e5d8c0"/><path d="M583.4 320.1 H562.5 V344.1 L581.1 344.1 Z" fill="#c8b9a0"/><path d="M543.9 344.1 H562.5 V361.5 L545.3 359.5 Z" fill="#8b5d38"/><path d="M581.1 344.1 H562.5 V361.5 L579.7 359.5 Z" fill="#76492a"/><path d="M539.5 297.8 H562.5 V300.5 H539.7 Z" fill="#b3c3d4"/><path d="M585.5 297.8 H562.5 V300.5 H585.3 Z" fill="#93a1b3"/><path d="M541.6 320.1 H583.4" stroke="#7d8796" stroke-width="0.7" opacity="0.6"/><path d="M543.9 344.1 H581.1" stroke="#7d8796" stroke-width="0.7" opacity="0.6"/><path d="M539.9 301.0 L545.3 359.5 L562.5 361.5 L579.7 359.5 L585.1 301.0" fill="none" stroke="#3a3034" stroke-width="1.2" opacity="0.8"/></g><circle cx="562.5" cy="491.5" r="60" fill="#ffffff"/><circle cx="562.5" cy="491.5" r="57.5" fill="url(#og)"/><g clip-path="url(#c2)"><path d="M594.5 455.5 L632.5 489.5 L592.5 564.5 L540.5 526.5 Z" fill="#000" opacity="0.08"/><path d="M530.5 454.5 H594.5 L593.5 458.0 H531.5 Z" fill="#d9ecf7"/><path d="M562.5 454.5 H594.5 L593.5 458.0 H562.5 Z" fill="#c5d9e8"/><path d="M533.5 458.0 H591.5 L584.0 525.5 L562.5 528.5 L541.0 525.5 Z" fill="#f3fbff"/><path d="M562.5 458.0 H591.5 L584.0 525.5 L562.5 528.5 Z" fill="#dfe9f2"/><path d="M539.5 455.0 H562.5 V490.7 L542.9 490.7 Z" fill="#bfcad6"/><path d="M585.5 455.0 H562.5 V490.7 L582.1 490.7 Z" fill="#979ea8"/><path d="M542.9 490.7 H562.5 V518.5 L545.3 516.5 Z" fill="#8a5a3b"/><path d="M582.1 490.7 H562.5 V518.5 L579.7 516.5 Z" fill="#784c2a"/><path d="M539.5 454.8 H562.5 V457.5 H539.7 Z" fill="#b3c3d4"/><path d="M585.5 454.8 H562.5 V457.5 H585.3 Z" fill="#93a1b3"/><path d="M542.9 490.7 H582.1" stroke="#7d8796" stroke-width="0.7" opacity="0.6"/><path d="M539.9 458.0 L545.3 516.5 L562.5 518.5 L579.7 516.5 L585.1 458.0" fill="none" stroke="#3a3034" stroke-width="1.2" opacity="0.8"/></g><circle cx="562.5" cy="648.5" r="60" fill="#ffffff"/><circle cx="562.5" cy="648.5" r="57.5" fill="url(#og)"/><g clip-path="url(#c3)"><path d="M594.5 612.5 L632.5 646.5 L592.5 721.5 L540.5 683.5 Z" fill="#000" opacity="0.08"/><path d="M530.5 611.5 H594.5 L593.5 615.0 H531.5 Z" fill="#d9ecf7"/><path d="M562.5 611.5 H594.5 L593.5 615.0 H562.5 Z" fill="#c5d9e8"/><path d="M533.5 615.0 H591.5 L584.0 682.5 L562.5 685.5 L541.0 682.5 Z" fill="#f3fbff"/><path d="M562.5 615.0 H591.5 L584.0 682.5 L562.5 685.5 Z" fill="#dfe9f2"/><path d="M539.5 612.0 H562.5 V624.3 L540.7 624.3 Z" fill="#fffdf5"/><path d="M585.5 612.0 H562.5 V624.3 L584.3 624.3 Z" fill="#ece6da"/><path d="M540.7 624.3 H562.5 V675.5 L545.3 673.5 Z" fill="#e6d9c4"/><path d="M584.3 624.3 H562.5 V675.5 L579.7 673.5 Z" fill="#c9b9a2"/><path d="M539.5 611.8 H562.5 V614.5 H539.7 Z" fill="#b3c3d4"/><path d="M585.5 611.8 H562.5 V614.5 H585.3 Z" fill="#93a1b3"/><path d="M540.7 624.3 H584.3" stroke="#7d8796" stroke-width="0.7" opacity="0.6"/><path d="M539.9 615.0 L545.3 673.5 L562.5 675.5 L579.7 673.5 L585.1 615.0" fill="none" stroke="#3a3034" stroke-width="1.2" opacity="0.8"/></g><path d="M684 357 H868 L866 369 H686 Z" fill="#d5e7f3"/><path d="M777 357 H868 L866 369 H777 Z" fill="#bed3e8"/><path d="M695.5 369 H858.5 L844 516 H710 Z" fill="#ffffff"/><path d="M777 369 H858.5 L844 516 H777 Z" fill="#f0f0f1"/><path d="M695.5 369 H777 V398.5 H698.4 Z" fill="#eefaff"/><path d="M777 369 H858.5 L855.6 398.5 H777 Z" fill="#d2dae6"/><path d="M710 516 H844 L837.5 562 L777 567.5 L717 562 Z" fill="#f5feff"/><path d="M777 516 H844 L837.5 562 L777 567.5 Z" fill="#d4dbe5"/><path d="M710 516 L777 518 L844 516" fill="none" stroke="#cfd6dc" stroke-width="1.2"/><path d="M751 435 C758 417 778 414 791 422 C805 432 803 451 790 459 C780 465 776 471 776 482 V494" fill="none" stroke="#f4a522" stroke-width="25" stroke-linejoin="round"/><rect x="763.5" y="480" width="25" height="26" rx="3" fill="#f4a522"/><clipPath id="qr"><rect x="777" y="380" width="60" height="140"/></clipPath><g clip-path="url(#qr)"><path d="M751 435 C758 417 778 414 791 422 C805 432 803 451 790 459 C780 465 776 471 776 482 V494" fill="none" stroke="#d48f1f" stroke-width="25" stroke-linejoin="round"/><rect x="763.5" y="480" width="25" height="26" rx="3" fill="#d48f1f"/></g><path d="M1178.3 516 L1183.5 562 L1235 567.8" fill="none" stroke="#ffffff" stroke-width="2" stroke-dasharray="2 2"/><clipPath id="cr"><rect x="1169.5" y="500" width="80" height="160"/></clipPath><g clip-path="url(#cr)"><text transform="translate(1166.5 639.7) scale(0.8 1)" font-family="Liberation Sans" font-size="30.4" fill="#ffffff">O</text><text transform="translate(1185.2 639.7) scale(1.0 1)" font-family="Liberation Sans" font-size="30.4" fill="#ffffff">N</text><text transform="translate(1207.5 639.7) scale(0.9 1)" font-family="Liberation Sans" font-size="30.4" fill="#ffffff">T</text><text transform="translate(1225.2 639.7) scale(1.0 1)" font-family="Liberation Sans" font-size="30.4" fill="#ffffff">I</text><text transform="translate(1232.6 639.7) scale(1.0 1)" font-family="Liberation Sans" font-size="30.4" fill="#ffffff">N</text></g></g><text x="562.5" y="414" font-family="Liberation Sans" font-size="13.5" fill="#3b2e27" text-anchor="middle" letter-spacing="-0.3">Cappuccino</text><text x="562.5" y="571" font-family="Liberation Sans" font-size="13.5" fill="#3b2e27" text-anchor="middle" letter-spacing="-0.3">Espresso</text><path d="M864 409.5 H878 M851 513.5 H878" stroke="#c9c0b8" stroke-width="1"/><rect x="473.6" y="271.6" width="695.6" height="384.8" fill="none" stroke="#e3289f" stroke-width="1.3"/><path d="M474 272 V656 H1169 V517" fill="none" stroke="#e3289f" stroke-width="2"/><path d="M1169.5 656.5 H1235" stroke="#e3289f" stroke-width="1.3"/><rect x="473" y="253" width="98" height="19" fill="#e3289f"/><path d="M477.5 257.5 H485.5 V260 M477.5 257.5 V265.5 H481" fill="none" stroke="#f3c6e4" stroke-width="1.2"/><path d="M483 260.5 L488.5 265 L486 265.6 L487.4 268.6 L486.2 269.1 L484.8 266.2 L483 267.8 Z" fill="#f3c6e4"/><text x="491" y="267" font-family="Liberation Sans" font-size="11.5" fill="#f6d3ea" letter-spacing="-0.45">choosingCoffee</text><rect x="471.5" y="269.5" width="5" height="5" fill="#ffffff" stroke="#e3289f" stroke-width="1"/><rect x="818.5" y="269.5" width="5" height="5" fill="#ffffff" stroke="#e3289f" stroke-width="1"/><rect x="471.5" y="461.5" width="5" height="5" fill="#ffffff" stroke="#e3289f" stroke-width="1"/><rect x="471.5" y="653.5" width="5" height="5" fill="#ffffff" stroke="#e3289f" stroke-width="1"/><rect x="818.5" y="653.5" width="5" height="5" fill="#ffffff" stroke="#e3289f" stroke-width="1"/><rect x="1166.5" y="653.5" width="5" height="5" fill="#ffffff" stroke="#e3289f" stroke-width="1"/></svg>
<div class="a" style="left:1235px;top:118px;width:10px;height:737px;background:#1a1a1a;"></div>
<div class="a" style="left:1235px;top:118px;width:10px;height:452px;background:#5c5d5f;"></div>
<div class="a" style="left:1245px;top:72px;width:1px;height:793px;background:#444444;"></div>
<div class="a" style="left:394px;top:853px;width:851px;height:11px;background:#1a1a1a;"></div>
<div class="a" style="left:394px;top:853px;width:841px;height:1px;background:#222;"></div>
<div class="a" style="left:801px;top:854px;width:140px;height:10px;background:#5c5d5f;"></div>
<div class="a" style="left:1236px;top:855px;width:9px;height:9px;background:#262626;"></div>
<div class="a" style="left:1246px;top:72px;width:673px;height:22px;background:#1a1a1a;"></div>
<div class="a" style="left:1246px;top:73px;width:83px;height:21px;background:#d9d9d9;"></div>
<div class="t" style="left:1254px;top:76px;color:#3a3a3a;">Text Editor</div>
<svg style="left:1310px;top:78px" width="11" height="11" viewBox="0 0 11 11"><rect x="0.5" y="0.5" width="10" height="10" rx="1.5" fill="none" stroke="#4e4e4e" stroke-width="1"/><path d="M3 3 L8 8 M8 3 L3 8" stroke="#4e4e4e" stroke-width="1.9" fill="none"/></svg>
<svg style="left:1862px;top:81px" width="8" height="4" viewBox="0 0 8 4"><path d="M0 0 H8 L4 4 Z" fill="#000000"/></svg>
<svg style="left:1883px;top:78px" width="11" height="11" viewBox="0 0 11 11"><rect x="0.5" y="0.5" width="10" height="10" rx="1.5" fill="none" stroke="#b4b0ac" stroke-width="1"/><path d="M4.5 2.5 H8.5 V6.5 M2.5 4.5 H6.5 V8.5 H2.5 Z" stroke="#b4b0ac" stroke-width="1" fill="none"/></svg>
<svg style="left:1904px;top:78px" width="11" height="11" viewBox="0 0 11 11"><rect x="0.5" y="0.5" width="10" height="10" rx="1.5" fill="none" stroke="#b4b0ac" stroke-width="1"/><path d="M1.5 1.5 L9.5 9.5 M9.5 1.5 L1.5 9.5" stroke="#b4b0ac" stroke-width="1.2" fill="none"/></svg>
<div class="a" style="left:1246px;top:94px;width:664px;height:752px;background:#2e2f30;"></div>
<div class="a" style="left:1246px;top:94px;width:71px;height:752px;background:#404244;"></div>
<div class="a" style="left:1910px;top:94px;width:9px;height:752px;background:#1a1a1a;"></div>
<div class="a" style="left:1910px;top:114px;width:8px;height:86px;background:#5f6063;"></div>
<div class="a" style="left:1246px;top:846px;width:673px;height:18px;background:#1a1a1a;"></div>
<div class="t" style="left:1278px;top:98px;color:#bec0c2;font-size:13px;letter-spacing:-0.3px">50</div>
<div class="t mono" style="left:1353px;top:97px;line-height:16px"><span style="color:#45c6d6;font-style:italic;">property alias</span> <span style="color:#ff6aad;">choosingCoffee</span><span style="color:#d6cf9a;">: </span><span style="color:#9acfd6;font-style:italic;">choosingCoffee</span></div>
<div class="t" style="left:1255px;width:37px;text-align:right;top:523px;color:#bec0c2;font-size:13px;letter-spacing:-0.4px">84</div>
<div class="t" style="left:1255px;width:37px;text-align:right;top:540px;color:#bec0c2;font-size:13px;letter-spacing:-0.4px">85</div>
<svg style="left:1302px;top:544px" width="8" height="5" viewBox="0 0 8 5"><path d="M0 0 H8 L4 5 Z" fill="#a8aaac"/></svg>
<div class="t mono" style="left:1321px;top:538px;line-height:16px">    <span style="color:#66a334;">Timeline</span><span style="color:#d6cf9a;"> {</span></div>
<div class="t" style="left:1255px;width:37px;text-align:right;top:557px;color:#bec0c2;font-size:13px;letter-spacing:-0.4px">86</div>
<div class="t mono" style="left:1321px;top:555px;line-height:16px">        <span style="color:#ff6aad;">id</span><span style="color:#d6cf9a;">: </span><span style="color:#9acfd6;font-style:italic;">timeline</span></div>
<div class="t" style="left:1255px;width:37px;text-align:right;top:574px;color:#bec0c2;font-size:13px;letter-spacing:-0.4px">87</div>
<div class="t" style="left:1255px;width:37px;text-align:right;top:591px;color:#bec0c2;font-size:13px;letter-spacing:-0.4px">88</div>
<div class="t mono" style="left:1321px;top:589px;line-height:16px">        <span style="color:#ff6aad;">enabled</span><span style="color:#d6cf9a;">: true</span></div>
<div class="t" style="left:1255px;width:37px;text-align:right;top:608px;color:#bec0c2;font-size:13px;letter-spacing:-0.4px">89</div>
<div class="t" style="left:1255px;width:37px;text-align:right;top:625px;color:#bec0c2;font-size:13px;letter-spacing:-0.4px">90</div>
<svg style="left:1302px;top:629px" width="8" height="5" viewBox="0 0 8 5"><path d="M0 0 H8 L4 5 Z" fill="#a8aaac"/></svg>
<div class="t mono" style="left:1321px;top:623px;line-height:16px">        <span style="color:#ff6aad;">animations</span><span style="color:#d6cf9a;">: [</span></div>
<div class="t" style="left:1255px;width:37px;text-align:right;top:642px;color:#bec0c2;font-size:13px;letter-spacing:-0.4px">91</div>
<svg style="left:1302px;top:646px" width="8" height="5" viewBox="0 0 8 5"><path d="M0 0 H8 L4 5 Z" fill="#a8aaac"/></svg>
<div class="t mono" style="left:1321px;top:640px;line-height:16px">            <span style="color:#66a334;">TimelineAnimation</span><span style="color:#d6cf9a;"> {</span></div>
<div class="t" style="left:1255px;width:37px;text-align:right;top:659px;color:#bec0c2;font-size:13px;letter-spacing:-0.4px">92</div>
<div class="t mono" style="left:1321px;top:657px;line-height:16px">                <span style="color:#ff6aad;">id</span><span style="color:#d6cf9a;">: </span><span style="color:#9acfd6;font-style:italic;">toSettingsAnimation</span></div>
<div class="t" style="left:1255px;width:37px;text-align:right;top:676px;color:#bec0c2;font-size:13px;letter-spacing:-0.4px">93</div>
<div class="t mono" style="left:1321px;top:674px;line-height:16px">                <span style="color:#ff6aad;">onFinished</span><span style="color:#d6cf9a;">: </span><span style="color:#9acfd6;font-style:italic;">root</span><span style="color:#d6cf9a;">.state = </span><span style="color:#d69545;">"settings"</span></div>
<div class="t" style="left:1255px;width:37px;text-align:right;top:693px;color:#bec0c2;font-size:13px;letter-spacing:-0.4px">94</div>
<div class="t mono" style="left:1321px;top:691px;line-height:16px">                <span style="color:#ff6aad;">loops</span><span style="color:#d6cf9a;">: 1</span></div>
<div class="t" style="left:1255px;width:37px;text-align:right;top:710px;color:#bec0c2;font-size:13px;letter-spacing:-0.4px">95</div>
<div class="t mono" style="left:1321px;top:708px;line-height:16px">                <span style="color:#ff6aad;">running</span><span style="color:#d6cf9a;">: false</span></div>
<div class="t" style="left:1255px;width:37px;text-align:right;top:727px;color:#bec0c2;font-size:13px;letter-spacing:-0.4px">96</div>
<div class="t mono" style="left:1321px;top:725px;line-height:16px">                <span style="color:#ff6aad;">to</span><span style="color:#d6cf9a;">: 400</span></div>
<div class="t" style="left:1255px;width:37px;text-align:right;top:744px;color:#bec0c2;font-size:13px;letter-spacing:-0.4px">97</div>
<div class="t mono" style="left:1321px;top:742px;line-height:16px">                <span style="color:#ff6aad;">duration</span><span style="color:#d6cf9a;">: 300</span></div>
<div class="t" style="left:1255px;width:37px;text-align:right;top:761px;color:#bec0c2;font-size:13px;letter-spacing:-0.4px">98</div>
<div class="t mono" style="left:1321px;top:759px;line-height:16px">                <span style="color:#ff6aad;">from</span><span style="color:#d6cf9a;">: 200</span></div>
<div class="t" style="left:1255px;width:37px;text-align:right;top:778px;color:#bec0c2;font-size:13px;letter-spacing:-0.4px">99</div>
<div class="t mono" style="left:1321px;top:776px;line-height:16px">            <span style="color:#d6cf9a;">},</span></div>
<div class="t" style="left:1255px;width:37px;text-align:right;top:795px;color:#bec0c2;font-size:13px;letter-spacing:-0.4px">100</div>
<svg style="left:1302px;top:799px" width="8" height="5" viewBox="0 0 8 5"><path d="M0 0 H8 L4 5 Z" fill="#a8aaac"/></svg>
<div class="t mono" style="left:1321px;top:793px;line-height:16px">            <span style="color:#66a334;">TimelineAnimation</span><span style="color:#d6cf9a;"> {</span></div>
<div class="t" style="left:1255px;width:37px;text-align:right;top:812px;color:#bec0c2;font-size:13px;letter-spacing:-0.4px">101</div>
<div class="t mono" style="left:1321px;top:810px;line-height:16px">                <span style="color:#ff6aad;">id</span><span style="color:#d6cf9a;">: </span><span style="color:#9acfd6;font-style:italic;">toEmptyCubAnimation</span></div>
<div class="t" style="left:1255px;width:37px;text-align:right;top:829px;color:#bec0c2;font-size:13px;letter-spacing:-0.4px">102</div>
<div class="t mono" style="left:1321px;top:827px;line-height:16px">                <span style="color:#ff6aad;">onFinished</span><span style="color:#d6cf9a;">: </span><span style="color:#9acfd6;font-style:italic;">root</span><span style="color:#d6cf9a;">.state = </span><span style="color:#d69545;">"empty cup"</span></div>
<div class="a" style="left:394px;top:864px;width:1525px;height:1px;background:#444444;"></div>
<div class="a" style="left:394px;top:865px;width:1525px;height:22px;background:#1a1a1a;"></div>
<div class="t" style="left:402px;top:868px;color:#dcdcdc;">States</div>
<div class="a" style="left:443px;top:865px;width:93px;height:21px;background:#d9d9d9;"></div>
<div class="t" style="left:451px;top:868px;color:#3a3a3a;">Output Pane</div>
<svg style="left:517px;top:870px" width="11" height="11" viewBox="0 0 11 11"><rect x="0.5" y="0.5" width="10" height="10" rx="1.5" fill="none" stroke="#4e4e4e" stroke-width="1"/><path d="M3 3 L8 8 M8 3 L3 8" stroke="#4e4e4e" stroke-width="1.9" fill="none"/></svg>
<svg style="left:1862px;top:873px" width="8" height="4" viewBox="0 0 8 4"><path d="M0 0 H8 L4 4 Z" fill="#000000"/></svg>
<svg style="left:1883px;top:870px" width="11" height="11" viewBox="0 0 11 11"><rect x="0.5" y="0.5" width="10" height="10" rx="1.5" fill="none" stroke="#b4b0ac" stroke-width="1"/><path d="M4.5 2.5 H8.5 V6.5 M2.5 4.5 H6.5 V8.5 H2.5 Z" stroke="#b4b0ac" stroke-width="1" fill="none"/></svg>
<svg style="left:1904px;top:870px" width="11" height="11" viewBox="0 0 11 11"><rect x="0.5" y="0.5" width="10" height="10" rx="1.5" fill="none" stroke="#b4b0ac" stroke-width="1"/><path d="M1.5 1.5 L9.5 9.5 M9.5 1.5 L1.5 9.5" stroke="#b4b0ac" stroke-width="1.2" fill="none"/></svg>
<div class="a" style="left:394px;top:887px;width:1525px;height:23px;background:#1a1a1a;"></div>
<div class="t" style="left:399px;top:891px;color:#dcdcdc;">General Messages</div>
<div class="a" style="left:519px;top:889px;width:1px;height:18px;background:#6a6a6a;"></div>
<svg style="left:529px;top:890px" width="15" height="15" viewBox="0 0 15 15"><path d="M4.5 0 H6.5 V6 H4.5 Z M2.5 6.5 H8.5 L10 12 H0.5 Z" fill="#c4c4c4"/><path d="M9 10.5 H13.5 V14.5 H8" fill="none" stroke="#c4c4c4" stroke-width="1"/></svg>
<svg style="left:556px;top:892px" width="8" height="12" viewBox="0 0 8 12"><path d="M7 0.5 L1.2 6 L7 11.5" fill="none" stroke="#6a6a6a" stroke-width="1.2"/></svg>
<svg style="left:580px;top:892px" width="8" height="12" viewBox="0 0 8 12"><path d="M1 0.5 L6.8 6 L1 11.5" fill="none" stroke="#6a6a6a" stroke-width="1.2"/></svg>
<div class="a" style="left:596px;top:887px;width:139px;height:22px;background:#262729;"></div>
<svg style="left:602px;top:891px" width="15" height="14" viewBox="0 0 15 14"><circle cx="8.5" cy="5" r="4.2" fill="none" stroke="#c4c4c4" stroke-width="1.5"/><path d="M5.5 8 L0.8 12.8" stroke="#c4c4c4" stroke-width="1.8"/><path d="M10.5 11.5 H14.5 L12.5 13.5 Z" fill="#c4c4c4"/></svg>
<div class="t" style="left:623px;top:891px;color:#7c7c7c;font-size:12px;letter-spacing:-0.3px">Filter</div>
<svg style="left:741px;top:892px" width="12" height="12" viewBox="0 0 12 12"><path d="M0 6 H12 M6 0 V12" stroke="#e0e0e0" stroke-width="1.6"/></svg>
<svg style="left:765px;top:897px" width="12" height="2" viewBox="0 0 12 2"><path d="M0 1 H12" stroke="#e0e0e0" stroke-width="1.6"/></svg>
<svg style="left:1878px;top:895px" width="11" height="7" viewBox="0 0 11 7"><path d="M0.5 6.5 L5.5 1 L10.5 6.5" fill="none" stroke="#c4c4c4" stroke-width="1.2"/></svg>
<svg style="left:1903px;top:895px" width="11" height="10" viewBox="0 0 11 10"><rect x="0.5" y="0.5" width="10" height="9" fill="none" stroke="#c4c4c4" stroke-width="1"/><rect x="0.5" y="0.5" width="10" height="2" fill="#c4c4c4"/><path d="M3.5 5 H7.5 L5.5 7.2 Z" fill="#c4c4c4"/></svg>
<div class="a" style="left:394px;top:910px;width:1516px;height:144px;background:#262729;"></div>
<div class="a" style="left:1910px;top:910px;width:9px;height:144px;background:#606061;"></div>
<div class="t mono" style="left:398px;top:916px;line-height:16px;color:#e2e2e2">Boot2Qt: Starting QDB host server.</div>
<div class="t mono" style="left:398px;top:933px;line-height:16px;color:#e2e2e2">Boot2Qt: Could not find QDB host server executable. You can set the location with environment variable BOOT2QT_QDB_FILEPATH.</div>
<div class="t mono" style="left:398px;top:950px;line-height:16px;color:#e2e2e2">Boot2Qt: Device detection error: Could not connect to QDB host server even after trying to start it.</div>
<div class="a" style="left:39px;top:1054px;width:1880px;height:25px;background:#1a1a1a;"></div>
<svg style="left:47px;top:1062px" width="12" height="11" viewBox="0 0 12 11"><rect x="0.5" y="0.5" width="11" height="10" fill="none" stroke="#808080" stroke-width="1"/><rect x="0.5" y="0.5" width="5" height="10" fill="#9a9a9a"/></svg>
<div class="a" style="left:71px;top:1056px;width:201px;height:22px;background:#242424;"></div>
<svg style="left:78px;top:1061px" width="15" height="14" viewBox="0 0 15 14"><circle cx="8.5" cy="5" r="4.2" fill="none" stroke="#c4c4c4" stroke-width="1.5"/><path d="M5.5 8 L0.8 12.8" stroke="#c4c4c4" stroke-width="1.8"/><path d="M10.5 11.5 H14.5 L12.5 13.5 Z" fill="#c4c4c4"/></svg>
<div class="t" style="left:98px;top:1061px;color:#7a7a7a;">Type to locate (Ctrl+K)</div>
<div class="a" style="left:274px;top:1056px;width:1px;height:22px;background:#3a3a3a;"></div>
<div class="t" style="left:285px;top:1061px;color:#dcdcdc;">1</div>
<div class="t" style="left:297px;top:1061px;color:#dcdcdc;">Issues</div>
<div class="t" style="left:345px;top:1061px;color:#dcdcdc;">2</div>
<div class="t" style="left:358px;top:1061px;color:#dcdcdc;">Search Results</div>
<div class="t" style="left:447px;top:1061px;color:#dcdcdc;">3</div>
<div class="t" style="left:460px;top:1061px;color:#dcdcdc;">Application Output</div>
<div class="t" style="left:566px;top:1061px;color:#dcdcdc;">5</div>
<div class="t" style="left:579px;top:1061px;color:#dcdcdc;">QML Debugger Console</div>
<div class="t" style="left:707px;top:1061px;color:#dcdcdc;">6</div>
<div class="t" style="left:720px;top:1061px;color:#dcdcdc;">General Messages</div>
<svg style="left:827px;top:1061px" width="8" height="14" viewBox="0 0 8 14"><path d="M0 6 L4 1 L8 6 Z M0 8 L4 13 L8 8 Z" fill="#c8c8c8"/></svg>
<div class="a" style="left:1865px;top:1057px;width:24px;height:21px;background:#131313;"></div>
<svg style="left:1869px;top:1059px" width="17" height="14" viewBox="0 0 17 14"><rect x="1" y="8" width="14" height="4" rx="2" fill="#1a1a1a" stroke="#d0d0d0" stroke-width="1.1"/><rect x="2" y="9" width="7" height="2" fill="#777"/><path d="M9.5 4.5 H15.5 L12.5 1.5 Z" fill="#d0d0d0"/></svg>
<svg style="left:1902px;top:1062px" width="12" height="11" viewBox="0 0 12 11"><rect x="0.5" y="0.5" width="11" height="10" fill="none" stroke="#808080" stroke-width="1"/><rect x="6.5" y="0.5" width="5" height="10" fill="#808080"/></svg>
<div class="a" style="left:47px;top:1078px;width:346px;height:1px;background:#8fd8f5;"></div>
<div class="a" style="left:878px;top:105px;width:980px;height:412px;background:#262626;box-shadow:0 2px 9px 0 rgba(0,0,0,0.28)"></div>
<div class="a" style="left:878px;top:105px;width:980px;height:30px;background:#ffffff;"></div>
<svg style="left:886px;top:112px" width="15" height="15" viewBox="0 0 16 16"><path d="M2.5 0 H16 V13.5 L13.5 16 H0 V2.5 Z" fill="#16548c"/><text x="8" y="12" font-family="Liberation Sans" font-weight="bold" font-size="10.5" fill="#fff" text-anchor="middle" letter-spacing="-0.9">DS</text></svg>
<div class="t" style="left:907px;top:113px;color:#000000;font-size:12px;letter-spacing:0">Timeline - Qt Design Studio</div>
<div class="a" style="left:1738px;top:119px;width:10px;height:1px;background:#b8b8b8;"></div>
<svg style="left:1784px;top:114px" width="10" height="10" viewBox="0 0 10 10"><rect x="0.5" y="0.5" width="9" height="9" fill="none" stroke="#000" stroke-width="1"/></svg>
<svg style="left:1829px;top:114px" width="11" height="11" viewBox="0 0 11 11"><path d="M0.5 0.5 L10.5 10.5 M10.5 0.5 L0.5 10.5" stroke="#000" stroke-width="1.1"/></svg>
<div class="a" style="left:878px;top:135px;width:980px;height:26px;background:#1d1d1d;"></div>
<svg style="left:889px;top:142px" width="14" height="13" viewBox="0 0 14 13"><rect x="0.6" y="0.6" width="12.8" height="11.8" fill="none" stroke="#b9bcc0" stroke-width="1.2"/><path d="M3.5 0.6 V12.4 M10.5 0.6 V12.4 M3.5 6.5 H10.5 M0.6 4.5 H3.5 M0.6 8.5 H3.5 M10.5 4.5 H13.4 M10.5 8.5 H13.4" stroke="#b9bcc0" stroke-width="1.1" fill="none"/></svg>
<svg style="left:913px;top:141px" width="15" height="14" viewBox="0 0 15 14"><path d="M1 13.5 C4 2.5 11 2.5 14 13.5" fill="none" stroke="#b9bcc0" stroke-width="1.1"/><path d="M2 2.5 L12.5 2.5" fill="none" stroke="#b9bcc0" stroke-width="1" transform="rotate(20 7.5 2.5)"/><circle cx="2" cy="1.8" r="1.5" fill="none" stroke="#b9bcc0" stroke-width="0.9"/><circle cx="13" cy="1.8" r="1.5" fill="none" stroke="#b9bcc0" stroke-width="0.9"/></svg>
<div class="t" style="left:1029px;top:141px;color:#dcdcdc;">timeline</div>
<svg style="left:1077px;top:141px" width="14" height="14" viewBox="0 0 14 14"><rect x="0" y="0" width="2" height="14" fill="#b9bcc0"/><path d="M14 0 V14 L3.5 7 Z" fill="#b9bcc0"/></svg>
<svg style="left:1103px;top:141px" width="14" height="14" viewBox="0 0 14 14"><path d="M10.5 0 V14 L0 7 Z" fill="#b9bcc0"/><rect x="12" y="0" width="2" height="14" fill="#b9bcc0"/></svg>
<svg style="left:1129px;top:141px" width="13" height="14" viewBox="0 0 13 14"><path d="M0 0 L13 7 L0 14 Z" fill="#93c466"/></svg>
<svg style="left:1154px;top:141px" width="14" height="14" viewBox="0 0 14 14"><rect x="0" y="0" width="2" height="14" fill="#b9bcc0"/><path d="M3.5 0 V14 L14 7 Z" fill="#b9bcc0"/></svg>
<svg style="left:1181px;top:141px" width="14" height="14" viewBox="0 0 14 14"><path d="M0 0 V14 L10.5 7 Z" fill="#b9bcc0"/><rect x="12" y="0" width="2" height="14" fill="#b9bcc0"/></svg>
<div class="a" style="left:1208px;top:140px;width:1px;height:16px;background:#5a5a5a;"></div>
<div class="a" style="left:1262px;top:140px;width:1px;height:16px;background:#5a5a5a;"></div>
<div class="a" style="left:1312px;top:140px;width:1px;height:16px;background:#5a5a5a;"></div>
<div class="a" style="left:1467px;top:140px;width:1px;height:16px;background:#5a5a5a;"></div>
<div class="a" style="left:1521px;top:140px;width:1px;height:16px;background:#5a5a5a;"></div>
<div class="a" style="left:1720px;top:140px;width:1px;height:16px;background:#5a5a5a;"></div>
<div class="a" style="left:1774px;top:140px;width:1px;height:16px;background:#5a5a5a;"></div>
<div class="t" style="left:1230px;top:141px;color:#dcdcdc;">0</div>
<svg style="left:1280px;top:141px" width="14" height="14" viewBox="0 0 14 14"><circle cx="7" cy="7" r="7" fill="#b9bcc0"/></svg>
<svg style="left:1330px;top:141px" width="15" height="14" viewBox="0 0 15 14"><path d="M1 0 V13.5 H14" fill="none" stroke="#b9bcc0" stroke-width="1.2"/><path d="M12 2 H5.5 A2.4 2.4 0 0 0 5.5 6.8 H10 A2.4 2.4 0 0 1 10 11.5 H4" fill="none" stroke="#b9bcc0" stroke-width="1.5"/><circle cx="12.3" cy="2" r="1.7" fill="#b9bcc0"/><circle cx="4" cy="11.3" r="1.7" fill="#b9bcc0"/></svg>
<div class="t" style="left:1489px;top:141px;color:#dcdcdc;">0</div>
<svg style="left:1539px;top:141px" width="14" height="14" viewBox="0 0 14 14"><circle cx="5.5" cy="5.5" r="3.8" fill="none" stroke="#b9bcc0" stroke-width="1.4"/><path d="M8.3 8.3 L12.5 12.5" stroke="#b9bcc0" stroke-width="1.8"/></svg>
<div class="a" style="left:1578px;top:146px;width:93px;height:3px;background:#333333;border-radius:1.5px"></div>
<div class="a" style="left:1570px;top:142px;width:11px;height:11px;background:#44464a;border-radius:2.5px;border:1px solid #2c2c2e"></div>
<svg style="left:1687px;top:140px" width="15" height="15" viewBox="0 0 15 15"><circle cx="6" cy="6" r="4.6" fill="none" stroke="#b9bcc0" stroke-width="1.6"/><path d="M9.4 9.4 L14 14" stroke="#b9bcc0" stroke-width="2"/></svg>
<div class="t" style="left:1734px;top:141px;color:#dcdcdc;">2000</div>
<div class="t" style="left:1791px;top:141px;color:#dcdcdc;">Base State</div>
<div class="a" style="left:878px;top:161px;width:200px;height:111px;background:#1a1a1a;"></div>
<div class="a" style="left:878px;top:161px;width:200px;height:20px;background:#262626;"></div>
<div class="a" style="left:1078px;top:161px;width:780px;height:20px;background:#262626;"></div>
<div class="a" style="left:1088px;top:161px;width:233px;height:20px;background:#353637;"></div>
<div class="a" style="left:1320px;top:161px;width:8px;height:20px;background:#4092c7;border-radius:0 5px 0 0"></div>
<svg style="left:0;top:0" width="1920" height="200" viewBox="0 0 1920 200"><rect x="1100.25" y="177.5" width="1.3" height="3.5" fill="#aeb4ba"/><rect x="1111.80" y="177.5" width="1.3" height="3.5" fill="#aeb4ba"/><rect x="1123.35" y="177.5" width="1.3" height="3.5" fill="#aeb4ba"/><rect x="1134.90" y="177.5" width="1.3" height="3.5" fill="#aeb4ba"/><rect x="1146.45" y="173.5" width="1.3" height="7.5" fill="#aeb4ba"/><text x="1147.0" y="172.3" font-family="Liberation Sans" font-size="8.6" fill="#d4d8dc" text-anchor="middle" letter-spacing="-0.8">500</text><rect x="1158.00" y="177.5" width="1.3" height="3.5" fill="#aeb4ba"/><rect x="1169.55" y="177.5" width="1.3" height="3.5" fill="#aeb4ba"/><rect x="1181.10" y="177.5" width="1.3" height="3.5" fill="#aeb4ba"/><rect x="1192.65" y="177.5" width="1.3" height="3.5" fill="#aeb4ba"/><rect x="1204.20" y="173.5" width="1.3" height="7.5" fill="#aeb4ba"/><text x="1204.8" y="172.3" font-family="Liberation Sans" font-size="8.6" fill="#d4d8dc" text-anchor="middle" letter-spacing="-0.8">1000</text><rect x="1215.75" y="177.5" width="1.3" height="3.5" fill="#aeb4ba"/><rect x="1227.30" y="177.5" width="1.3" height="3.5" fill="#aeb4ba"/><rect x="1238.85" y="177.5" width="1.3" height="3.5" fill="#aeb4ba"/><rect x="1250.40" y="177.5" width="1.3" height="3.5" fill="#aeb4ba"/><rect x="1261.95" y="173.5" width="1.3" height="7.5" fill="#aeb4ba"/><text x="1262.5" y="172.3" font-family="Liberation Sans" font-size="8.6" fill="#d4d8dc" text-anchor="middle" letter-spacing="-0.8">1500</text><rect x="1273.50" y="177.5" width="1.3" height="3.5" fill="#aeb4ba"/><rect x="1285.05" y="177.5" width="1.3" height="3.5" fill="#aeb4ba"/><rect x="1296.60" y="177.5" width="1.3" height="3.5" fill="#aeb4ba"/><rect x="1308.15" y="177.5" width="1.3" height="3.5" fill="#aeb4ba"/><rect x="1319.70" y="173.5" width="1.3" height="7.5" fill="#aeb4ba"/><text x="1320.3" y="172.3" font-family="Liberation Sans" font-size="8.6" fill="#d4d8dc" text-anchor="middle" letter-spacing="-0.8">2000</text><rect x="1331.25" y="177.5" width="1.3" height="3.5" fill="#aeb4ba"/><rect x="1342.80" y="177.5" width="1.3" height="3.5" fill="#aeb4ba"/><rect x="1354.35" y="177.5" width="1.3" height="3.5" fill="#aeb4ba"/><rect x="1365.90" y="177.5" width="1.3" height="3.5" fill="#aeb4ba"/><rect x="1377.45" y="173.5" width="1.3" height="7.5" fill="#aeb4ba"/><text x="1378.0" y="172.3" font-family="Liberation Sans" font-size="8.6" fill="#d4d8dc" text-anchor="middle" letter-spacing="-0.8">2500</text><rect x="1389.00" y="177.5" width="1.3" height="3.5" fill="#aeb4ba"/><rect x="1400.55" y="177.5" width="1.3" height="3.5" fill="#aeb4ba"/><rect x="1412.10" y="177.5" width="1.3" height="3.5" fill="#aeb4ba"/><rect x="1423.65" y="177.5" width="1.3" height="3.5" fill="#aeb4ba"/><rect x="1435.20" y="173.5" width="1.3" height="7.5" fill="#aeb4ba"/><text x="1435.8" y="172.3" font-family="Liberation Sans" font-size="8.6" fill="#d4d8dc" text-anchor="middle" letter-spacing="-0.8">3000</text><rect x="1446.75" y="177.5" width="1.3" height="3.5" fill="#aeb4ba"/><rect x="1458.30" y="177.5" width="1.3" height="3.5" fill="#aeb4ba"/><rect x="1469.85" y="177.5" width="1.3" height="3.5" fill="#aeb4ba"/><rect x="1481.40" y="177.5" width="1.3" height="3.5" fill="#aeb4ba"/><rect x="1492.95" y="173.5" width="1.3" height="7.5" fill="#aeb4ba"/><text x="1493.5" y="172.3" font-family="Liberation Sans" font-size="8.6" fill="#d4d8dc" text-anchor="middle" letter-spacing="-0.8">3500</text><rect x="1504.50" y="177.5" width="1.3" height="3.5" fill="#aeb4ba"/><rect x="1516.05" y="177.5" width="1.3" height="3.5" fill="#aeb4ba"/><rect x="1527.60" y="177.5" width="1.3" height="3.5" fill="#aeb4ba"/><rect x="1539.15" y="177.5" width="1.3" height="3.5" fill="#aeb4ba"/><rect x="1550.70" y="173.5" width="1.3" height="7.5" fill="#aeb4ba"/><text x="1551.3" y="172.3" font-family="Liberation Sans" font-size="8.6" fill="#d4d8dc" text-anchor="middle" letter-spacing="-0.8">4000</text><rect x="1562.25" y="177.5" width="1.3" height="3.5" fill="#aeb4ba"/><rect x="1573.80" y="177.5" width="1.3" height="3.5" fill="#aeb4ba"/><rect x="1585.35" y="177.5" width="1.3" height="3.5" fill="#aeb4ba"/><rect x="1596.90" y="177.5" width="1.3" height="3.5" fill="#aeb4ba"/><rect x="1608.45" y="173.5" width="1.3" height="7.5" fill="#aeb4ba"/><text x="1609.0" y="172.3" font-family="Liberation Sans" font-size="8.6" fill="#d4d8dc" text-anchor="middle" letter-spacing="-0.8">4500</text><rect x="1620.00" y="177.5" width="1.3" height="3.5" fill="#aeb4ba"/><rect x="1631.55" y="177.5" width="1.3" height="3.5" fill="#aeb4ba"/><rect x="1643.10" y="177.5" width="1.3" height="3.5" fill="#aeb4ba"/><rect x="1654.65" y="177.5" width="1.3" height="3.5" fill="#aeb4ba"/><rect x="1666.20" y="173.5" width="1.3" height="7.5" fill="#aeb4ba"/><text x="1666.8" y="172.3" font-family="Liberation Sans" font-size="8.6" fill="#d4d8dc" text-anchor="middle" letter-spacing="-0.8">5000</text><rect x="1677.75" y="177.5" width="1.3" height="3.5" fill="#aeb4ba"/><rect x="1689.30" y="177.5" width="1.3" height="3.5" fill="#aeb4ba"/><rect x="1700.85" y="177.5" width="1.3" height="3.5" fill="#aeb4ba"/><rect x="1712.40" y="177.5" width="1.3" height="3.5" fill="#aeb4ba"/><rect x="1723.95" y="173.5" width="1.3" height="7.5" fill="#aeb4ba"/><text x="1724.5" y="172.3" font-family="Liberation Sans" font-size="8.6" fill="#d4d8dc" text-anchor="middle" letter-spacing="-0.8">5500</text><rect x="1735.50" y="177.5" width="1.3" height="3.5" fill="#aeb4ba"/><rect x="1747.05" y="177.5" width="1.3" height="3.5" fill="#aeb4ba"/><rect x="1758.60" y="177.5" width="1.3" height="3.5" fill="#aeb4ba"/><rect x="1770.15" y="177.5" width="1.3" height="3.5" fill="#aeb4ba"/><rect x="1781.70" y="173.5" width="1.3" height="7.5" fill="#aeb4ba"/><text x="1782.3" y="172.3" font-family="Liberation Sans" font-size="8.6" fill="#d4d8dc" text-anchor="middle" letter-spacing="-0.8">6000</text><rect x="1793.25" y="177.5" width="1.3" height="3.5" fill="#aeb4ba"/><rect x="1804.80" y="177.5" width="1.3" height="3.5" fill="#aeb4ba"/><rect x="1816.35" y="177.5" width="1.3" height="3.5" fill="#aeb4ba"/><rect x="1827.90" y="177.5" width="1.3" height="3.5" fill="#aeb4ba"/><rect x="1839.45" y="173.5" width="1.3" height="7.5" fill="#aeb4ba"/><text x="1840.0" y="172.3" font-family="Liberation Sans" font-size="8.6" fill="#d4d8dc" text-anchor="middle" letter-spacing="-0.8">6500</text></svg>
<div class="a" style="left:1078px;top:181px;width:770px;height:90px;background:#262728;"></div>
<div class="a" style="left:1078px;top:199px;width:770px;height:1px;background:#1b1b1c;"></div>
<div class="a" style="left:1078px;top:217px;width:770px;height:1px;background:#1b1b1c;"></div>
<div class="a" style="left:1078px;top:235px;width:770px;height:1px;background:#1b1b1c;"></div>
<div class="a" style="left:1078px;top:253px;width:770px;height:1px;background:#1b1b1c;"></div>
<div class="a" style="left:1078px;top:271px;width:770px;height:1px;background:#1b1b1c;"></div>
<div class="a" style="left:878px;top:236px;width:199px;height:17px;background:#4095c9;"></div>
<svg style="left:884px;top:205px" width="5" height="8" viewBox="0 0 5 8"><path d="M0 0 L5 4 L0 8 Z" fill="#a4a6a8"/></svg>
<div class="t" style="left:902px;top:202px;color:#dcdcdc;">emptyCup</div>
<svg style="left:884px;top:223px" width="5" height="8" viewBox="0 0 5 8"><path d="M0 0 L5 4 L0 8 Z" fill="#a4a6a8"/></svg>
<div class="t" style="left:902px;top:220px;color:#dcdcdc;">brewing</div>
<svg style="left:884px;top:241px" width="5" height="8" viewBox="0 0 5 8"><path d="M0 0 L5 4 L0 8 Z" fill="#9fc0dc"/></svg>
<div class="t" style="left:902px;top:238px;color:#dcdcdc;">choosingCoffee</div>
<div class="a" style="left:1089px;top:200px;width:138px;height:17px;background:#3278a3;"></div>
<div class="a" style="left:1111px;top:202px;width:1px;height:13px;background:#cfe0ee;"></div>
<div class="a" style="left:1134px;top:202px;width:1px;height:13px;background:#cfe0ee;"></div>
<div class="a" style="left:1157px;top:202px;width:1px;height:13px;background:#cfe0ee;"></div>
<div class="a" style="left:1180px;top:202px;width:1px;height:13px;background:#cfe0ee;"></div>
<div class="a" style="left:1204px;top:202px;width:1px;height:13px;background:#cfe0ee;"></div>
<div class="a" style="left:1227px;top:202px;width:1px;height:13px;background:#cfe0ee;"></div>
<div class="a" style="left:1089px;top:218px;width:138px;height:17px;background:#3278a3;"></div>
<div class="a" style="left:1111px;top:220px;width:1px;height:13px;background:#cfe0ee;"></div>
<div class="a" style="left:1134px;top:220px;width:1px;height:13px;background:#cfe0ee;"></div>
<div class="a" style="left:1157px;top:220px;width:1px;height:13px;background:#cfe0ee;"></div>
<div class="a" style="left:1180px;top:220px;width:1px;height:13px;background:#cfe0ee;"></div>
<div class="a" style="left:1204px;top:220px;width:1px;height:13px;background:#cfe0ee;"></div>
<div class="a" style="left:1227px;top:220px;width:1px;height:13px;background:#cfe0ee;"></div>
<div class="a" style="left:1089px;top:236px;width:138px;height:17px;background:#4092c7;"></div>
<div class="a" style="left:1111px;top:238px;width:1px;height:13px;background:#cfe0ee;"></div>
<div class="a" style="left:1134px;top:238px;width:1px;height:13px;background:#cfe0ee;"></div>
<div class="a" style="left:1157px;top:238px;width:1px;height:13px;background:#cfe0ee;"></div>
<div class="a" style="left:1180px;top:238px;width:1px;height:13px;background:#cfe0ee;"></div>
<div class="a" style="left:1204px;top:238px;width:1px;height:13px;background:#cfe0ee;"></div>
<div class="a" style="left:1227px;top:238px;width:1px;height:13px;background:#cfe0ee;"></div>
<div class="a" style="left:1203px;top:202px;width:2px;height:13px;background:#dbe8f2;"></div>
<div class="a" style="left:1081px;top:164px;width:8px;height:17px;background:#4194cf;border-radius:3px 0 0 2px"></div>
<svg style="left:1081px;top:161px" width="16" height="12" viewBox="0 0 16 12"><path d="M1.5 0 H14.5 Q15.5 0 15 1.2 L8.4 11 L7.6 11 L1 1.2 Q0.5 0 1.5 0 Z" fill="#dfd40c"/><path d="M8 0 H14.5 Q15.5 0 15 1.2 L8.4 11 L8 11 Z" fill="#c9c40c"/></svg>
<div class="a" style="left:1088px;top:170px;width:1px;height:305px;background:#d2b954;"></div>
<div class="a" style="left:1848px;top:181px;width:10px;height:304px;background:#5c5d5f;"></div>
<div class="a" style="left:1078px;top:475px;width:780px;height:10px;background:#5c5d5f;"></div>
<div class="t" style="left:880px;top:489px;color:#dcdcdc;">Playhead frame 0</div>
<div class="a" style="left:39px;top:72px;width:1880px;height:327px;background:rgba(51,153,255,0.25);border:1px solid rgba(30,105,190,0.6)"></div>
<div class="a" style="left:955px;top:76px;width:48px;height:48px;background:rgba(0,0,0,0.29);"></div>
<div class="a" style="left:962px;top:83px;width:34px;height:18px;background:#262728;border:1px solid #2f7bd1;border-top:4px solid #1f6fc4;overflow:hidden"><div class="a" style="left:0;top:0;width:32px;height:13px;background:#24384f"></div></div>
<svg style="left:971px;top:105px" width="16" height="7" viewBox="0 0 16 7"><path d="M0 7 L8 0 L16 7 Z" fill="#262728"/></svg>
<div class="a" style="left:955px;top:1002px;width:48px;height:48px;background:rgba(0,0,0,0.29);"></div>
<div class="a" style="left:962px;top:1026px;width:34px;height:18px;background:#262728;border:1px solid #2f7bd1;border-top:4px solid #1f6fc4;overflow:hidden"><div class="a" style="left:0;top:0;width:32px;height:13px;background:#24384f"></div></div>
<svg style="left:970px;top:1014px" width="17" height="7" viewBox="0 0 17 7"><path d="M0 0 L8.5 7 L17 0 Z" fill="#262728"/></svg>
<div class="a" style="left:43px;top:539px;width:48px;height:48px;background:rgba(0,0,0,0.29);"></div>
<div class="a" style="left:50px;top:546px;width:18px;height:34px;background:#262728;border:1px solid #2f7bd1;border-top:4px solid #1f6fc4;overflow:hidden"><div class="a" style="left:0;top:0;width:16px;height:29px;background:#24384f"></div></div>
<svg style="left:72px;top:555px" width="7" height="16" viewBox="0 0 7 16"><path d="M7 0 L0 8 L7 16 Z" fill="#262728"/></svg>
<div class="a" style="left:1868px;top:539px;width:48px;height:48px;background:rgba(0,0,0,0.29);"></div>
<div class="a" style="left:1892px;top:546px;width:17px;height:34px;background:#262728;border:1px solid #2f7bd1;border-top:4px solid #1f6fc4;overflow:hidden"><div class="a" style="left:0;top:0;width:15px;height:29px;background:#24384f"></div></div>
<svg style="left:1880px;top:555px" width="7" height="16" viewBox="0 0 7 16"><path d="M0 0 L7 8 L0 16 Z" fill="#262728"/></svg>
<div class="a" style="left:796px;top:397px;width:48px;height:144px;background:rgba(0,0,0,0.29);"></div>
<div class="a" style="left:748px;top:445px;width:48px;height:48px;background:rgba(0,0,0,0.29);"></div>
<div class="a" style="left:844px;top:445px;width:48px;height:48px;background:rgba(0,0,0,0.29);"></div>
<div class="a" style="left:803px;top:404px;width:34px;height:34px;background:#262728;border:1px solid #2f7bd1;border-top:4px solid #1f6fc4;overflow:hidden"><div class="a" style="left:0;top:0;width:32px;height:14px;background:#24384f;border-bottom:1px dashed #2f7bd1"></div></div>
<div class="a" style="left:803px;top:452px;width:34px;height:34px;background:#262728;border:1px solid #2f7bd1;border-top:4px solid #1f6fc4;overflow:hidden"></div>
<div class="a" style="left:755px;top:452px;width:34px;height:34px;background:#262728;border:1px solid #2f7bd1;border-top:4px solid #1f6fc4;overflow:hidden"><div class="a" style="left:0;top:0;width:16px;height:29px;background:#24384f;border-right:1px dashed #2f7bd1"></div></div>
<div class="a" style="left:851px;top:452px;width:34px;height:34px;background:#262728;border:1px solid #2f7bd1;border-top:4px solid #1f6fc4;overflow:hidden"><div class="a" style="left:16px;top:0;width:16px;height:29px;background:#24384f;border-left:1px dashed #2f7bd1"></div></div>
<div class="a" style="left:803px;top:500px;width:34px;height:34px;background:#262728;border:1px solid #2f7bd1;border-top:4px solid #1f6fc4;overflow:hidden"><div class="a" style="left:0;top:14px;width:32px;height:15px;background:#24384f;border-top:1px dashed #2f7bd1"></div></div>
<div class="a" style="left:0px;top:0px;width:1920px;height:1px;background:#19b1e8;"></div>
<div class="a" style="left:0px;top:0px;width:1px;height:1080px;background:#19b1e8;"></div>
<div class="a" style="left:1919px;top:0px;width:1px;height:1080px;background:#19b1e8;"></div>
<div class="a" style="left:0px;top:1079px;width:1920px;height:1px;background:#19b1e8;"></div>
</body></html>
